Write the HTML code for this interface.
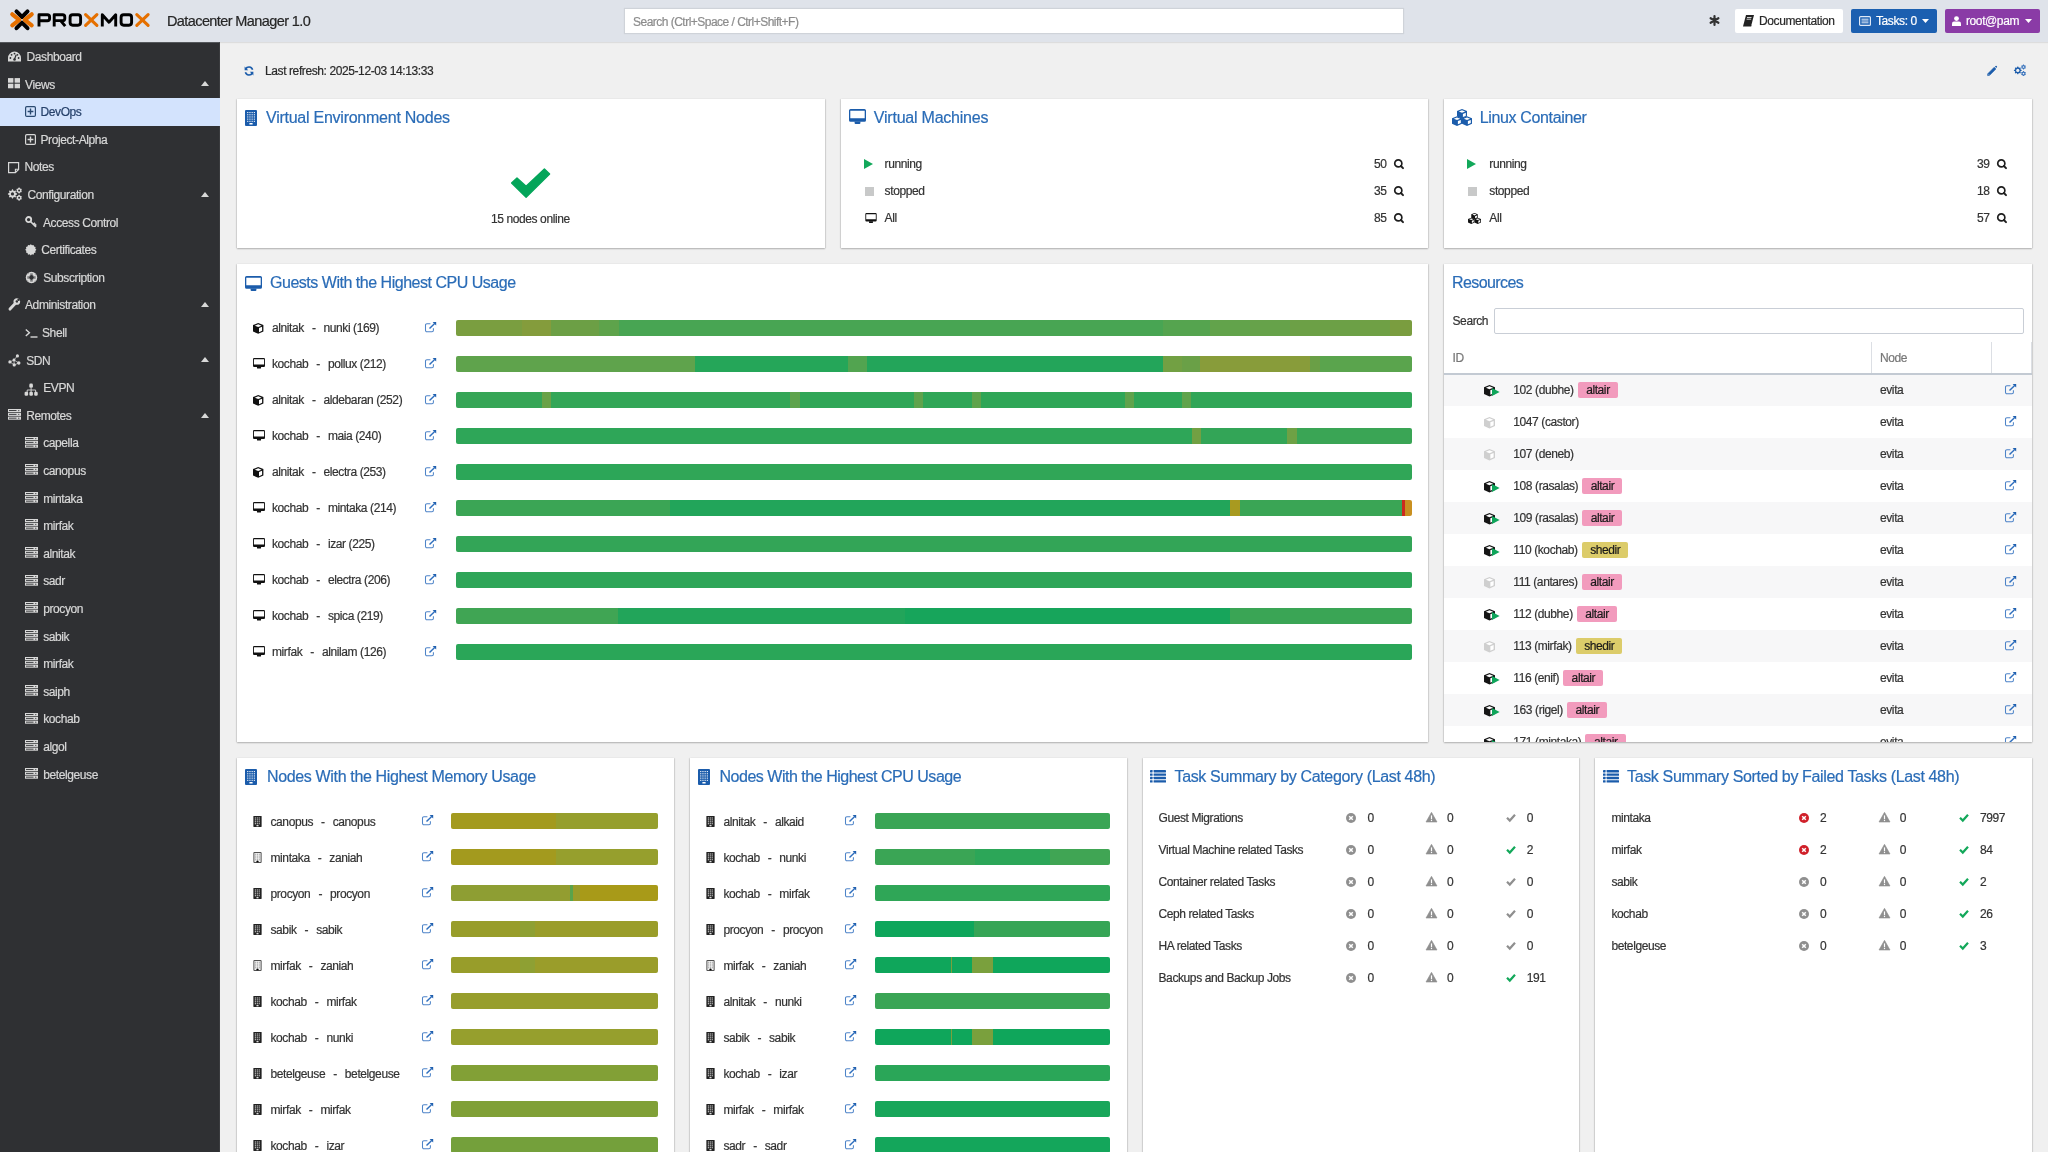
<!DOCTYPE html><html><head><meta charset="utf-8"><style>
*{box-sizing:border-box;margin:0;padding:0}
html,body{width:2048px;height:1152px;overflow:hidden;background:#f0f0f0;font-family:"Liberation Sans", sans-serif;}
.a{position:absolute}
.ic{position:absolute;overflow:visible}
.t{position:absolute;white-space:nowrap;font-size:12px;letter-spacing:-0.4px;color:#333333;line-height:14px;margin-top:0.5px;-webkit-text-stroke:0.2px currentColor}
.sb{position:absolute;white-space:nowrap;font-size:12px;letter-spacing:-0.4px;color:#dedede;line-height:14px;-webkit-text-stroke:0.2px currentColor}
.ttl{position:absolute;white-space:nowrap;font-size:16px;letter-spacing:-0.35px;color:#2a6cb7;line-height:18px;margin-top:0.9px;-webkit-text-stroke:0.2px currentColor}
.card{position:absolute;background:#fff;box-shadow:0 1px 1.5px rgba(0,0,0,.26),1px 0 1px rgba(0,0,0,.07),-1px 0 1px rgba(0,0,0,.07)}
.bar{position:absolute;height:16px;border-radius:2px}
</style></head><body><div id="root" style="position:absolute;left:0;top:0;width:2048px;height:1152px;overflow:hidden;background:#f0f0f0;will-change:transform">
<div class="a" style="left:0;top:0;width:2048px;height:42px;background:#dfe3ea;box-shadow:0 1px 1px rgba(0,0,0,.08)"></div>
<svg class="ic" style="left:0;top:0;width:160px;height:42px" viewBox="0 0 160 42">
<g fill="none" stroke-linecap="round" stroke-linejoin="miter" stroke-miterlimit="3">
<path d="M16.5 11.4L22 17 27.5 11.4" stroke="#000" stroke-width="4" stroke-linejoin="round"/>
<path d="M16.5 28.2L22 22.6 27.5 28.2" stroke="#000" stroke-width="4" stroke-linejoin="round"/>
<path d="M12.3 14.3L19.3 19.8 12.3 25.3" stroke="#e57000" stroke-width="4.2" stroke-linejoin="round"/>
<path d="M31.7 14.3L24.7 19.8 31.7 25.3" stroke="#e57000" stroke-width="4.2" stroke-linejoin="round"/>
</g>
<g fill="none" stroke="#000" stroke-width="2.9" stroke-linejoin="round">
<path d="M39 26.6V14.8H47.4Q49.6 14.8 49.6 17V18.6Q49.6 20.8 47.4 20.8H39.6"/>
<path d="M54.2 26.6V14.8H62.6Q64.8 14.8 64.8 17V18.4Q64.8 20.6 62.6 20.6H54.8M60.6 20.6L65.2 26.2"/>
<path d="M72.7 14.8H78Q80.6 14.8 80.6 17.4V22.6Q80.6 25.2 78 25.2H72.7Q70.1 25.2 70.1 22.6V17.4Q70.1 14.8 72.7 14.8Z"/>
<path d="M102.3 26.6V14.8L109 22.2 115.7 14.8V26.6"/>
<path d="M123.7 14.8H129Q131.6 14.8 131.6 17.4V22.6Q131.6 25.2 129 25.2H123.7Q121.1 25.2 121.1 22.6V17.4Q121.1 14.8 123.7 14.8Z"/>
</g>
<g stroke="#e57000" stroke-width="3.1" stroke-linecap="round">
<path d="M85.6 14.6L96.9 25.4M96.9 14.6L85.6 25.4"/>
<path d="M136.8 14.6L148.1 25.4M148.1 14.6L136.8 25.4"/>
</g>
</svg>
<div class="t" style="left:167px;top:12px;font-size:14.5px;letter-spacing:-0.6px;line-height:16px;color:#262626">Datacenter Manager 1.0</div>
<div class="a" style="left:625px;top:9px;width:778px;height:24px;background:#fff;box-shadow:0 0 1px 1px rgba(0,0,0,.07)"></div>
<div class="t" style="left:633px;top:14px;color:#8c8c8c;letter-spacing:-0.52px">Search (Ctrl+Space / Ctrl+Shift+F)</div>
<svg class="ic" style="left:1709px;top:15px;width:11px;height:11px" viewBox="0 0 11 11"><g stroke="#333" stroke-width="2.2" stroke-linecap="round"><path d="M5.5 1v9M1.6 3.25l7.8 4.5M1.6 7.75l7.8-4.5"/></g></svg>
<div class="a" style="left:1735px;top:9px;width:108px;height:24px;background:#fff;border-radius:2px"></div>
<svg class="ic" style="left:1743px;top:15px;width:11px;height:12px" viewBox="0 0 11 12"><path d="M3 0h8l-2.6 10H0.4z" fill="#222"/><path d="M0.4 10h8.2l-0.4 1.6H0z" fill="#222"/><path d="M4 2.5h4.5M3.6 4.2h4.5" stroke="#fff" stroke-width=".8"/></svg>
<div class="t" style="left:1759px;top:13px;color:#2a2a2a">Documentation</div>
<div class="a" style="left:1851px;top:9px;width:86px;height:24px;background:#1b5fb0;border-radius:2px"></div>
<svg class="ic" style="left:1859px;top:16px;width:12px;height:10px" viewBox="0 0 12 10"><rect x=".6" y=".6" width="10.8" height="8.8" rx="1" fill="none" stroke="#dfe9f7" stroke-width="1.2"/><path d="M2.5 3.2h7M2.5 5h7M2.5 6.8h7" stroke="#dfe9f7" stroke-width="1"/></svg>
<div class="t" style="left:1876px;top:13px;color:#fff">Tasks: 0</div>
<svg class="ic" style="left:1922px;top:19px;width:7px;height:4px" viewBox="0 0 7 4"><path d="M0 0h7L3.5 4z" fill="#fff"/></svg>
<div class="a" style="left:1945px;top:9px;width:95px;height:24px;background:#8a3ba6;border-radius:2px"></div>
<svg class="ic" style="left:1952px;top:16px;width:9px;height:10px" viewBox="0 0 9 10"><circle cx="4.5" cy="2.6" r="2.4" fill="#fff"/><path d="M0 10V7.6Q0 5.6 2 5.6h5q2 0 2 2V10z" fill="#fff"/></svg>
<div class="t" style="left:1966px;top:13px;color:#fff">root@pam</div>
<svg class="ic" style="left:2025px;top:19px;width:7px;height:4px" viewBox="0 0 7 4"><path d="M0 0h7L3.5 4z" fill="#fff"/></svg>
<div class="a" style="left:0;top:42px;width:220px;height:1110px;background:#2f3033;border-top:1px solid #55585c;border-right:1px solid #3a3b3e"></div>
<div class="a" style="left:0;top:97.5px;width:220px;height:28px;background:#d3e3fd"></div>
<svg class="ic" style="left:8px;top:51.25px;width:13px;height:11px" viewBox="0 0 13 11"><path d="M6.5 0.5A6.5 6.5 0 0 0 0 7v3.5h13V7A6.5 6.5 0 0 0 6.5 0.5z" fill="#d8d8d8"/><circle cx="2.4" cy="7" r=".9" fill="#2f3033"/><circle cx="3.6" cy="3.8" r=".9" fill="#2f3033"/><circle cx="6.5" cy="2.6" r=".9" fill="#2f3033"/><circle cx="10.6" cy="7" r=".9" fill="#2f3033"/><circle cx="9.4" cy="3.8" r=".9" fill="#2f3033"/><path d="M6.5 8.2L8.2 3.8" stroke="#2f3033" stroke-width="1.2"/><circle cx="6.5" cy="8.5" r="1.3" fill="#2f3033"/></svg>
<div class="sb" style="left:26.5px;top:50.05px;color:#d8d8d8">Dashboard</div>
<svg class="ic" style="left:8px;top:77.85px;width:12px;height:10.4px" viewBox="0 0 12 10.2"><rect x="0" y="0" width="5.4" height="4.6" fill="#d8d8d8"/><rect x="6.6" y="0" width="5.4" height="4.6" fill="#d8d8d8"/><rect x="0" y="5.6" width="5.4" height="4.6" fill="#d8d8d8"/><rect x="6.6" y="5.6" width="5.4" height="4.6" fill="#d8d8d8"/></svg>
<div class="sb" style="left:25px;top:77.65px;color:#d8d8d8">Views</div>
<svg class="ic" style="left:201px;top:81.35px;width:8px;height:5px" viewBox="0 0 8 5"><path d="M0 5h8L4 0z" fill="#d8d8d8"/></svg>
<svg class="ic" style="left:24.5px;top:106.45px;width:11px;height:11px" viewBox="0 0 11 11"><rect x=".6" y=".6" width="9.8" height="9.8" rx="1.2" fill="none" stroke="#2b4a70" stroke-width="1.2"/><path d="M5.5 2.6v5.8M2.6 5.5h5.8" stroke="#2b4a70" stroke-width="1.4"/></svg>
<div class="sb" style="left:40.5px;top:105.25px;color:#26416a">DevOps</div>
<svg class="ic" style="left:24.5px;top:134.05px;width:11px;height:11px" viewBox="0 0 11 11"><rect x=".6" y=".6" width="9.8" height="9.8" rx="1.2" fill="none" stroke="#d8d8d8" stroke-width="1.2"/><path d="M5.5 2.6v5.8M2.6 5.5h5.8" stroke="#d8d8d8" stroke-width="1.4"/></svg>
<div class="sb" style="left:40.5px;top:132.85px;color:#d8d8d8">Project-Alpha</div>
<svg class="ic" style="left:8px;top:161.65px;width:11.5px;height:11.5px" viewBox="0 0 11.5 11.5"><path d="M0.6 0.6h10v6.8l-3.2 3.2H0.6z" fill="none" stroke="#d8d8d8" stroke-width="1.2"/><path d="M10.6 7.2H7.4v3.4" fill="none" stroke="#d8d8d8" stroke-width="1.1"/></svg>
<div class="sb" style="left:24.5px;top:160.45px;color:#d8d8d8">Notes</div>
<svg class="ic" style="left:0px;top:184.75px;width:24px;height:18px" viewBox="0 0 24 18"><polygon points="12.05,4.37 12.95,4.37 13.49,5.70 14.10,5.95 15.42,5.39 16.06,6.03 15.50,7.35 15.75,7.96 17.08,8.50 17.08,9.40 15.75,9.94 15.50,10.55 16.06,11.87 15.42,12.51 14.10,11.95 13.49,12.20 12.95,13.53 12.05,13.53 11.51,12.20 10.90,11.95 9.58,12.51 8.94,11.87 9.50,10.55 9.25,9.94 7.92,9.40 7.92,8.50 9.25,7.96 9.50,7.35 8.94,6.03 9.58,5.39 10.90,5.95 11.51,5.70" fill="#d8d8d8"/><circle cx="12.5" cy="8.95" r="1.6" fill="#2f3033"/><polygon points="18.72,2.62 19.48,2.62 20.00,3.33 20.53,3.64 21.40,3.73 21.78,4.39 21.43,5.19 21.43,5.81 21.78,6.61 21.40,7.27 20.53,7.36 20.00,7.67 19.48,8.38 18.72,8.38 18.20,7.67 17.67,7.36 16.80,7.27 16.42,6.61 16.77,5.81 16.77,5.19 16.42,4.39 16.80,3.73 17.67,3.64 18.20,3.33" fill="#d8d8d8"/><circle cx="19.1" cy="5.5" r="1.0" fill="#2f3033"/><polygon points="18.72,9.87 19.48,9.87 20.00,10.58 20.53,10.89 21.40,10.98 21.78,11.64 21.43,12.44 21.43,13.06 21.78,13.86 21.40,14.52 20.53,14.61 20.00,14.92 19.48,15.63 18.72,15.63 18.20,14.92 17.67,14.61 16.80,14.52 16.42,13.86 16.77,13.06 16.77,12.44 16.42,11.64 16.80,10.98 17.67,10.89 18.20,10.58" fill="#d8d8d8"/><circle cx="19.1" cy="12.75" r="1.0" fill="#2f3033"/></svg>
<div class="sb" style="left:27.5px;top:188.05px;color:#d8d8d8">Configuration</div>
<svg class="ic" style="left:201px;top:191.75px;width:8px;height:5px" viewBox="0 0 8 5"><path d="M0 5h8L4 0z" fill="#d8d8d8"/></svg>
<svg class="ic" style="left:24.5px;top:216.35000000000002px;width:12.5px;height:12px" viewBox="0 0 12.5 12"><circle cx="3.6" cy="3.6" r="2.6" fill="none" stroke="#d8d8d8" stroke-width="1.8"/><path d="M5.5 5.5l5.5 5.5M8.4 8.4l1.6-1.6M9.8 9.8l1.4-1.4" stroke="#d8d8d8" stroke-width="1.7"/></svg>
<div class="sb" style="left:43px;top:215.65px;color:#d8d8d8">Access Control</div>
<svg class="ic" style="left:24.5px;top:244.15px;width:11.6px;height:11.6px" viewBox="0 0 11.6 11.6"><polygon points="11.40,5.80 10.24,6.99 10.65,8.60 9.05,9.05 8.60,10.65 6.99,10.24 5.80,11.40 4.61,10.24 3.00,10.65 2.55,9.05 0.95,8.60 1.36,6.99 0.20,5.80 1.36,4.61 0.95,3.00 2.55,2.55 3.00,0.95 4.61,1.36 5.80,0.20 6.99,1.36 8.60,0.95 9.05,2.55 10.65,3.00 10.24,4.61" fill="#d8d8d8"/></svg>
<div class="sb" style="left:41.2px;top:243.25px;color:#d8d8d8">Certificates</div>
<svg class="ic" style="left:24.5px;top:271.05px;width:13px;height:13px" viewBox="0 0 13 13"><circle cx="6.5" cy="6.5" r="5.7" fill="#d8d8d8"/><circle cx="6.5" cy="6.5" r="2.4" fill="#2f3033"/><path d="M5.2 3.1h2.6M5.2 9.9h2.6M3.1 5.2v2.6M9.9 5.2v2.6" stroke="#2f3033" stroke-width=".9"/><circle cx="6.5" cy="6.5" r="4.9" fill="none" stroke="#2f3033" stroke-width=".5" stroke-dasharray="1.5 6.2" stroke-dashoffset="-3.1" opacity=".6"/></svg>
<div class="sb" style="left:43.2px;top:270.85px;color:#d8d8d8">Subscription</div>
<svg class="ic" style="left:0px;top:295.15px;width:24px;height:18px" viewBox="0 0 24 18"><path d="M10 14.1L15.2 8.6" stroke="#d8d8d8" stroke-width="2.9" stroke-linecap="round"/><circle cx="16.8" cy="6.5" r="2.3" fill="none" stroke="#d8d8d8" stroke-width="2.1"/><circle cx="18.6" cy="4.7" r="1.25" fill="#2f3033"/></svg>
<div class="sb" style="left:25px;top:298.45px;color:#d8d8d8">Administration</div>
<svg class="ic" style="left:201px;top:302.15px;width:8px;height:5px" viewBox="0 0 8 5"><path d="M0 5h8L4 0z" fill="#d8d8d8"/></svg>
<svg class="ic" style="left:24.5px;top:328.25px;width:12.5px;height:10px" viewBox="0 0 12.5 10"><path d="M0.8 1.5l3.6 3.2-3.6 3.2" fill="none" stroke="#d8d8d8" stroke-width="1.4"/><path d="M5.5 9h7" stroke="#d8d8d8" stroke-width="1.4"/></svg>
<div class="sb" style="left:42px;top:326.05px;color:#d8d8d8">Shell</div>
<svg class="ic" style="left:0px;top:354.35px;width:24px;height:14px" viewBox="0 0 24 14"><path d="M9.9 7.9L14 6 17.4 1.9M14 6L14.2 10.9M14 6L18.8 9M9.9 7.9L14.2 10.9 18.8 9" stroke="#d8d8d8" stroke-width=".7" fill="none"/><circle cx="17.4" cy="1.9" r="1.6" fill="#d8d8d8"/><circle cx="14" cy="6" r="1.45" fill="#d8d8d8"/><circle cx="9.9" cy="7.9" r="1.6" fill="#d8d8d8"/><circle cx="18.8" cy="9" r="1.7" fill="#d8d8d8"/><circle cx="14.2" cy="10.9" r="1.6" fill="#d8d8d8"/></svg>
<div class="sb" style="left:26.2px;top:353.65px;color:#d8d8d8">SDN</div>
<svg class="ic" style="left:201px;top:357.35px;width:8px;height:5px" viewBox="0 0 8 5"><path d="M0 5h8L4 0z" fill="#d8d8d8"/></svg>
<svg class="ic" style="left:20px;top:381.95000000000005px;width:20px;height:16px" viewBox="20 0 20 16"><rect x="29.3" y="1.6" width="3.6" height="4.2" rx="1.3" fill="#d8d8d8"/><path d="M31.1 5.5V8M27.2 10.5V8H35.6V10.5M31.1 8V10.5" fill="none" stroke="#d8d8d8" stroke-width=".9"/><rect x="24.6" y="9.8" width="3.5" height="4" rx="1.2" fill="#d8d8d8"/><rect x="29.4" y="9.8" width="3.5" height="4" rx="1.2" fill="#d8d8d8"/><rect x="34.2" y="9.8" width="3.5" height="4" rx="1.2" fill="#d8d8d8"/></svg>
<div class="sb" style="left:43.2px;top:381.25px;color:#d8d8d8">EVPN</div>
<svg class="ic" style="left:8px;top:408.95px;width:13px;height:11px" viewBox="0 0 13 11"><rect x="0" y="0.0" width="13" height="3.1" fill="#d8d8d8"/><rect x="1" y="1.1" width="7.5" height=".9" fill="#2f3033"/><circle cx="10.8" cy="1.55" r=".6" fill="#2f3033"/><rect x="0" y="3.8" width="13" height="3.1" fill="#d8d8d8"/><rect x="1" y="4.9" width="7.5" height=".9" fill="#2f3033"/><circle cx="10.8" cy="5.35" r=".6" fill="#2f3033"/><rect x="0" y="7.6" width="13" height="3.1" fill="#d8d8d8"/><rect x="1" y="8.7" width="7.5" height=".9" fill="#2f3033"/><circle cx="10.8" cy="9.15" r=".6" fill="#2f3033"/></svg>
<div class="sb" style="left:26.2px;top:408.85px;color:#d8d8d8">Remotes</div>
<svg class="ic" style="left:201px;top:412.55px;width:8px;height:5px" viewBox="0 0 8 5"><path d="M0 5h8L4 0z" fill="#d8d8d8"/></svg>
<svg class="ic" style="left:24.5px;top:436.55px;width:13px;height:11px" viewBox="0 0 13 11"><rect x="0" y="0.0" width="13" height="3.1" fill="#d8d8d8"/><rect x="1" y="1.1" width="7.5" height=".9" fill="#2f3033"/><circle cx="10.8" cy="1.55" r=".6" fill="#2f3033"/><rect x="0" y="3.8" width="13" height="3.1" fill="#d8d8d8"/><rect x="1" y="4.9" width="7.5" height=".9" fill="#2f3033"/><circle cx="10.8" cy="5.35" r=".6" fill="#2f3033"/><rect x="0" y="7.6" width="13" height="3.1" fill="#d8d8d8"/><rect x="1" y="8.7" width="7.5" height=".9" fill="#2f3033"/><circle cx="10.8" cy="9.15" r=".6" fill="#2f3033"/></svg>
<div class="sb" style="left:43.2px;top:436.45px;color:#d8d8d8">capella</div>
<svg class="ic" style="left:24.5px;top:464.15px;width:13px;height:11px" viewBox="0 0 13 11"><rect x="0" y="0.0" width="13" height="3.1" fill="#d8d8d8"/><rect x="1" y="1.1" width="7.5" height=".9" fill="#2f3033"/><circle cx="10.8" cy="1.55" r=".6" fill="#2f3033"/><rect x="0" y="3.8" width="13" height="3.1" fill="#d8d8d8"/><rect x="1" y="4.9" width="7.5" height=".9" fill="#2f3033"/><circle cx="10.8" cy="5.35" r=".6" fill="#2f3033"/><rect x="0" y="7.6" width="13" height="3.1" fill="#d8d8d8"/><rect x="1" y="8.7" width="7.5" height=".9" fill="#2f3033"/><circle cx="10.8" cy="9.15" r=".6" fill="#2f3033"/></svg>
<div class="sb" style="left:43.2px;top:464.05px;color:#d8d8d8">canopus</div>
<svg class="ic" style="left:24.5px;top:491.75px;width:13px;height:11px" viewBox="0 0 13 11"><rect x="0" y="0.0" width="13" height="3.1" fill="#d8d8d8"/><rect x="1" y="1.1" width="7.5" height=".9" fill="#2f3033"/><circle cx="10.8" cy="1.55" r=".6" fill="#2f3033"/><rect x="0" y="3.8" width="13" height="3.1" fill="#d8d8d8"/><rect x="1" y="4.9" width="7.5" height=".9" fill="#2f3033"/><circle cx="10.8" cy="5.35" r=".6" fill="#2f3033"/><rect x="0" y="7.6" width="13" height="3.1" fill="#d8d8d8"/><rect x="1" y="8.7" width="7.5" height=".9" fill="#2f3033"/><circle cx="10.8" cy="9.15" r=".6" fill="#2f3033"/></svg>
<div class="sb" style="left:43.2px;top:491.65px;color:#d8d8d8">mintaka</div>
<svg class="ic" style="left:24.5px;top:519.35px;width:13px;height:11px" viewBox="0 0 13 11"><rect x="0" y="0.0" width="13" height="3.1" fill="#d8d8d8"/><rect x="1" y="1.1" width="7.5" height=".9" fill="#2f3033"/><circle cx="10.8" cy="1.55" r=".6" fill="#2f3033"/><rect x="0" y="3.8" width="13" height="3.1" fill="#d8d8d8"/><rect x="1" y="4.9" width="7.5" height=".9" fill="#2f3033"/><circle cx="10.8" cy="5.35" r=".6" fill="#2f3033"/><rect x="0" y="7.6" width="13" height="3.1" fill="#d8d8d8"/><rect x="1" y="8.7" width="7.5" height=".9" fill="#2f3033"/><circle cx="10.8" cy="9.15" r=".6" fill="#2f3033"/></svg>
<div class="sb" style="left:43.2px;top:519.25px;color:#d8d8d8">mirfak</div>
<svg class="ic" style="left:24.5px;top:546.9499999999999px;width:13px;height:11px" viewBox="0 0 13 11"><rect x="0" y="0.0" width="13" height="3.1" fill="#d8d8d8"/><rect x="1" y="1.1" width="7.5" height=".9" fill="#2f3033"/><circle cx="10.8" cy="1.55" r=".6" fill="#2f3033"/><rect x="0" y="3.8" width="13" height="3.1" fill="#d8d8d8"/><rect x="1" y="4.9" width="7.5" height=".9" fill="#2f3033"/><circle cx="10.8" cy="5.35" r=".6" fill="#2f3033"/><rect x="0" y="7.6" width="13" height="3.1" fill="#d8d8d8"/><rect x="1" y="8.7" width="7.5" height=".9" fill="#2f3033"/><circle cx="10.8" cy="9.15" r=".6" fill="#2f3033"/></svg>
<div class="sb" style="left:43.2px;top:546.85px;color:#d8d8d8">alnitak</div>
<svg class="ic" style="left:24.5px;top:574.55px;width:13px;height:11px" viewBox="0 0 13 11"><rect x="0" y="0.0" width="13" height="3.1" fill="#d8d8d8"/><rect x="1" y="1.1" width="7.5" height=".9" fill="#2f3033"/><circle cx="10.8" cy="1.55" r=".6" fill="#2f3033"/><rect x="0" y="3.8" width="13" height="3.1" fill="#d8d8d8"/><rect x="1" y="4.9" width="7.5" height=".9" fill="#2f3033"/><circle cx="10.8" cy="5.35" r=".6" fill="#2f3033"/><rect x="0" y="7.6" width="13" height="3.1" fill="#d8d8d8"/><rect x="1" y="8.7" width="7.5" height=".9" fill="#2f3033"/><circle cx="10.8" cy="9.15" r=".6" fill="#2f3033"/></svg>
<div class="sb" style="left:43.2px;top:574.45px;color:#d8d8d8">sadr</div>
<svg class="ic" style="left:24.5px;top:602.15px;width:13px;height:11px" viewBox="0 0 13 11"><rect x="0" y="0.0" width="13" height="3.1" fill="#d8d8d8"/><rect x="1" y="1.1" width="7.5" height=".9" fill="#2f3033"/><circle cx="10.8" cy="1.55" r=".6" fill="#2f3033"/><rect x="0" y="3.8" width="13" height="3.1" fill="#d8d8d8"/><rect x="1" y="4.9" width="7.5" height=".9" fill="#2f3033"/><circle cx="10.8" cy="5.35" r=".6" fill="#2f3033"/><rect x="0" y="7.6" width="13" height="3.1" fill="#d8d8d8"/><rect x="1" y="8.7" width="7.5" height=".9" fill="#2f3033"/><circle cx="10.8" cy="9.15" r=".6" fill="#2f3033"/></svg>
<div class="sb" style="left:43.2px;top:602.05px;color:#d8d8d8">procyon</div>
<svg class="ic" style="left:24.5px;top:629.75px;width:13px;height:11px" viewBox="0 0 13 11"><rect x="0" y="0.0" width="13" height="3.1" fill="#d8d8d8"/><rect x="1" y="1.1" width="7.5" height=".9" fill="#2f3033"/><circle cx="10.8" cy="1.55" r=".6" fill="#2f3033"/><rect x="0" y="3.8" width="13" height="3.1" fill="#d8d8d8"/><rect x="1" y="4.9" width="7.5" height=".9" fill="#2f3033"/><circle cx="10.8" cy="5.35" r=".6" fill="#2f3033"/><rect x="0" y="7.6" width="13" height="3.1" fill="#d8d8d8"/><rect x="1" y="8.7" width="7.5" height=".9" fill="#2f3033"/><circle cx="10.8" cy="9.15" r=".6" fill="#2f3033"/></svg>
<div class="sb" style="left:43.2px;top:629.65px;color:#d8d8d8">sabik</div>
<svg class="ic" style="left:24.5px;top:657.35px;width:13px;height:11px" viewBox="0 0 13 11"><rect x="0" y="0.0" width="13" height="3.1" fill="#d8d8d8"/><rect x="1" y="1.1" width="7.5" height=".9" fill="#2f3033"/><circle cx="10.8" cy="1.55" r=".6" fill="#2f3033"/><rect x="0" y="3.8" width="13" height="3.1" fill="#d8d8d8"/><rect x="1" y="4.9" width="7.5" height=".9" fill="#2f3033"/><circle cx="10.8" cy="5.35" r=".6" fill="#2f3033"/><rect x="0" y="7.6" width="13" height="3.1" fill="#d8d8d8"/><rect x="1" y="8.7" width="7.5" height=".9" fill="#2f3033"/><circle cx="10.8" cy="9.15" r=".6" fill="#2f3033"/></svg>
<div class="sb" style="left:43.2px;top:657.25px;color:#d8d8d8">mirfak</div>
<svg class="ic" style="left:24.5px;top:684.95px;width:13px;height:11px" viewBox="0 0 13 11"><rect x="0" y="0.0" width="13" height="3.1" fill="#d8d8d8"/><rect x="1" y="1.1" width="7.5" height=".9" fill="#2f3033"/><circle cx="10.8" cy="1.55" r=".6" fill="#2f3033"/><rect x="0" y="3.8" width="13" height="3.1" fill="#d8d8d8"/><rect x="1" y="4.9" width="7.5" height=".9" fill="#2f3033"/><circle cx="10.8" cy="5.35" r=".6" fill="#2f3033"/><rect x="0" y="7.6" width="13" height="3.1" fill="#d8d8d8"/><rect x="1" y="8.7" width="7.5" height=".9" fill="#2f3033"/><circle cx="10.8" cy="9.15" r=".6" fill="#2f3033"/></svg>
<div class="sb" style="left:43.2px;top:684.85px;color:#d8d8d8">saiph</div>
<svg class="ic" style="left:24.5px;top:712.5500000000001px;width:13px;height:11px" viewBox="0 0 13 11"><rect x="0" y="0.0" width="13" height="3.1" fill="#d8d8d8"/><rect x="1" y="1.1" width="7.5" height=".9" fill="#2f3033"/><circle cx="10.8" cy="1.55" r=".6" fill="#2f3033"/><rect x="0" y="3.8" width="13" height="3.1" fill="#d8d8d8"/><rect x="1" y="4.9" width="7.5" height=".9" fill="#2f3033"/><circle cx="10.8" cy="5.35" r=".6" fill="#2f3033"/><rect x="0" y="7.6" width="13" height="3.1" fill="#d8d8d8"/><rect x="1" y="8.7" width="7.5" height=".9" fill="#2f3033"/><circle cx="10.8" cy="9.15" r=".6" fill="#2f3033"/></svg>
<div class="sb" style="left:43.2px;top:712.45px;color:#d8d8d8">kochab</div>
<svg class="ic" style="left:24.5px;top:740.15px;width:13px;height:11px" viewBox="0 0 13 11"><rect x="0" y="0.0" width="13" height="3.1" fill="#d8d8d8"/><rect x="1" y="1.1" width="7.5" height=".9" fill="#2f3033"/><circle cx="10.8" cy="1.55" r=".6" fill="#2f3033"/><rect x="0" y="3.8" width="13" height="3.1" fill="#d8d8d8"/><rect x="1" y="4.9" width="7.5" height=".9" fill="#2f3033"/><circle cx="10.8" cy="5.35" r=".6" fill="#2f3033"/><rect x="0" y="7.6" width="13" height="3.1" fill="#d8d8d8"/><rect x="1" y="8.7" width="7.5" height=".9" fill="#2f3033"/><circle cx="10.8" cy="9.15" r=".6" fill="#2f3033"/></svg>
<div class="sb" style="left:43.2px;top:740.05px;color:#d8d8d8">algol</div>
<svg class="ic" style="left:24.5px;top:767.75px;width:13px;height:11px" viewBox="0 0 13 11"><rect x="0" y="0.0" width="13" height="3.1" fill="#d8d8d8"/><rect x="1" y="1.1" width="7.5" height=".9" fill="#2f3033"/><circle cx="10.8" cy="1.55" r=".6" fill="#2f3033"/><rect x="0" y="3.8" width="13" height="3.1" fill="#d8d8d8"/><rect x="1" y="4.9" width="7.5" height=".9" fill="#2f3033"/><circle cx="10.8" cy="5.35" r=".6" fill="#2f3033"/><rect x="0" y="7.6" width="13" height="3.1" fill="#d8d8d8"/><rect x="1" y="8.7" width="7.5" height=".9" fill="#2f3033"/><circle cx="10.8" cy="9.15" r=".6" fill="#2f3033"/></svg>
<div class="sb" style="left:43.2px;top:767.65px;color:#d8d8d8">betelgeuse</div>
<svg class="ic" style="left:243.5px;top:65.5px;width:10px;height:10px" viewBox="0 0 10 10"><path d="M8.6 3.8A3.8 3.8 0 0 0 1.6 3" fill="none" stroke="#1b5cab" stroke-width="1.6"/><path d="M0.6 0.6v3.6h3.6z" fill="#1b5cab"/><path d="M1.4 6.2A3.8 3.8 0 0 0 8.4 7" fill="none" stroke="#1b5cab" stroke-width="1.6"/><path d="M9.4 9.4V5.8H5.8z" fill="#1b5cab"/></svg>
<div class="t" style="left:265px;top:63px;color:#2a2a2a">Last refresh: 2025-12-03 14:13:33</div>
<svg class="ic" style="left:1984px;top:62px;width:14px;height:14px" viewBox="1984 62 14 14"><path d="M1988.3 74.6L1987.4 75l.4-.9" fill="#1b5cab"/><path d="M1988 73.5L1994.2 67.3 1995.9 69 1989.7 75.2 1987.6 75.6z" fill="#1b5cab" stroke="#1b5cab" stroke-width=".6" stroke-linejoin="round"/><path d="M1994.9 66.6L1995.6 65.9Q1996.1 65.5 1996.6 65.9L1996.9 66.2Q1997.3 66.7 1996.9 67.2L1996.2 67.9z" fill="#1b5cab"/><path d="M1988.3 73.9l1 1" stroke="#cfdbea" stroke-width=".6"/></svg>
<svg class="ic" style="left:2008px;top:60px;width:24px;height:20px" viewBox="2008 60 24 20"><polygon points="2017.42,66.52 2018.18,66.52 2018.64,67.62 2019.17,67.84 2020.27,67.39 2020.81,67.93 2020.36,69.03 2020.58,69.56 2021.68,70.02 2021.68,70.78 2020.58,71.24 2020.36,71.77 2020.81,72.87 2020.27,73.41 2019.17,72.96 2018.64,73.18 2018.18,74.28 2017.42,74.28 2016.96,73.18 2016.43,72.96 2015.33,73.41 2014.79,72.87 2015.24,71.77 2015.02,71.24 2013.92,70.78 2013.92,70.02 2015.02,69.56 2015.24,69.03 2014.79,67.93 2015.33,67.39 2016.43,67.84 2016.96,67.62" fill="#1b5cab"/><circle cx="2017.8" cy="70.4" r="1.6" fill="#f0f0f0"/><polygon points="2023.17,64.52 2023.83,64.52 2024.27,65.15 2024.72,65.41 2025.48,65.48 2025.81,66.04 2025.48,66.74 2025.48,67.26 2025.81,67.96 2025.48,68.52 2024.72,68.59 2024.27,68.85 2023.83,69.48 2023.17,69.48 2022.73,68.85 2022.28,68.59 2021.52,68.52 2021.19,67.96 2021.52,67.26 2021.52,66.74 2021.19,66.04 2021.52,65.48 2022.28,65.41 2022.73,65.15" fill="#3a74bd"/><circle cx="2023.5" cy="67.0" r="0.85" fill="#f0f0f0"/><polygon points="2023.17,71.12 2023.83,71.12 2024.27,71.75 2024.72,72.01 2025.48,72.08 2025.81,72.64 2025.48,73.34 2025.48,73.86 2025.81,74.56 2025.48,75.12 2024.72,75.19 2024.27,75.45 2023.83,76.08 2023.17,76.08 2022.73,75.45 2022.28,75.19 2021.52,75.12 2021.19,74.56 2021.52,73.86 2021.52,73.34 2021.19,72.64 2021.52,72.08 2022.28,72.01 2022.73,71.75" fill="#3a74bd"/><circle cx="2023.5" cy="73.6" r="0.85" fill="#f0f0f0"/></svg>
<div class="card" style="left:237px;top:99px;width:588px;height:149px"></div>
<svg class="ic" style="left:245px;top:110px;width:12px;height:16px" viewBox="0 0 12 16"><rect x="0" y="0" width="12" height="16" rx="1" fill="#1b5cab"/><rect x="2.2" y="2.0" width="1.1" height="1.1" fill="#fff"/><rect x="4.4" y="2.0" width="1.1" height="1.1" fill="#fff"/><rect x="6.6" y="2.0" width="1.1" height="1.1" fill="#fff"/><rect x="8.8" y="2.0" width="1.1" height="1.1" fill="#fff"/><rect x="2.2" y="4.2" width="1.1" height="1.1" fill="#fff"/><rect x="4.4" y="4.2" width="1.1" height="1.1" fill="#fff"/><rect x="6.6" y="4.2" width="1.1" height="1.1" fill="#fff"/><rect x="8.8" y="4.2" width="1.1" height="1.1" fill="#fff"/><rect x="2.2" y="6.4" width="1.1" height="1.1" fill="#fff"/><rect x="4.4" y="6.4" width="1.1" height="1.1" fill="#fff"/><rect x="6.6" y="6.4" width="1.1" height="1.1" fill="#fff"/><rect x="8.8" y="6.4" width="1.1" height="1.1" fill="#fff"/><rect x="2.2" y="8.6" width="1.1" height="1.1" fill="#fff"/><rect x="4.4" y="8.6" width="1.1" height="1.1" fill="#fff"/><rect x="6.6" y="8.6" width="1.1" height="1.1" fill="#fff"/><rect x="8.8" y="8.6" width="1.1" height="1.1" fill="#fff"/><rect x="2.2" y="10.8" width="1.1" height="1.1" fill="#fff"/><rect x="4.4" y="10.8" width="1.1" height="1.1" fill="#fff"/><rect x="6.6" y="10.8" width="1.1" height="1.1" fill="#fff"/><rect x="8.8" y="10.8" width="1.1" height="1.1" fill="#fff"/><rect x="4.3" y="13" width="3.4" height="1.6" rx=".6" fill="#fff"/></svg>
<div class="ttl" style="left:266px;top:108px;letter-spacing:-0.25px">Virtual Environment Nodes</div>
<svg class="ic" style="left:500px;top:160px;width:60px;height:45px" viewBox="500 160 60 45"><path d="M511.6 183.1L517 177.9 526.1 186.2 544.4 168.9 549.6 174 526.1 197.3z" fill="#04a55a" stroke="#04a55a" stroke-width="1.4" stroke-linejoin="round"/></svg>
<div class="t" style="left:491px;top:211px">15 nodes online</div>
<div class="card" style="left:841px;top:99px;width:587px;height:149px"></div>
<svg class="ic" style="left:848.8px;top:109.1px;width:17px;height:15px" viewBox="0 0 17 15"><path d="M1.6 0h13.8A1.6 1.6 0 0 1 17 1.6v9.6a1.6 1.6 0 0 1-1.6 1.6H1.6A1.6 1.6 0 0 1 0 11.2V1.6A1.6 1.6 0 0 1 1.6 0zM1.3 1.7v7.5h14.4V1.7z" fill="#1b5cab" fill-rule="evenodd"/><path d="M5.6 12.5h5.8v1.6q0 .9-.9.9h-4q-.9 0-.9-.9z" fill="#1b5cab"/></svg>
<div class="ttl" style="left:873.8px;top:108px;letter-spacing:-0.22px">Virtual Machines</div>
<svg class="ic" style="left:864px;top:159px;width:9px;height:10px" viewBox="0 0 9 10"><path d="M0 0L9 5 0 10z" fill="#12a85a"/></svg>
<div class="a" style="left:864.7px;top:186.5px;width:9.4px;height:9.4px;background:#c8c9c9"></div>
<svg class="ic" style="left:864.7px;top:212.8px;width:12px;height:10px" viewBox="0 0 17 15"><path d="M1.6 0h13.8A1.6 1.6 0 0 1 17 1.6v9.6a1.6 1.6 0 0 1-1.6 1.6H1.6A1.6 1.6 0 0 1 0 11.2V1.6A1.6 1.6 0 0 1 1.6 0zM1.3 1.7v7.5h14.4V1.7z" fill="#111" fill-rule="evenodd"/><path d="M5.6 12.5h5.8v1.6q0 .9-.9.9h-4q-.9 0-.9-.9z" fill="#111"/></svg>
<div class="t" style="left:884.6px;top:156.5px">running</div>
<div class="t" style="left:1356.5px;width:30px;text-align:right;top:156.5px">50</div>
<svg class="ic" style="left:1394.0px;top:159px;width:10px;height:10px" viewBox="0 0 10 10"><circle cx="4.3" cy="4.4" r="3.55" fill="none" stroke="#1e1e1e" stroke-width="1.7"/><path d="M6.9 7L9 9.1" stroke="#1e1e1e" stroke-width="2" stroke-linecap="round"/></svg>
<div class="t" style="left:884.6px;top:183.5px">stopped</div>
<div class="t" style="left:1356.5px;width:30px;text-align:right;top:183.5px">35</div>
<svg class="ic" style="left:1394.0px;top:186px;width:10px;height:10px" viewBox="0 0 10 10"><circle cx="4.3" cy="4.4" r="3.55" fill="none" stroke="#1e1e1e" stroke-width="1.7"/><path d="M6.9 7L9 9.1" stroke="#1e1e1e" stroke-width="2" stroke-linecap="round"/></svg>
<div class="t" style="left:884.6px;top:210.5px">All</div>
<div class="t" style="left:1356.5px;width:30px;text-align:right;top:210.5px">85</div>
<svg class="ic" style="left:1394.0px;top:213px;width:10px;height:10px" viewBox="0 0 10 10"><circle cx="4.3" cy="4.4" r="3.55" fill="none" stroke="#1e1e1e" stroke-width="1.7"/><path d="M6.9 7L9 9.1" stroke="#1e1e1e" stroke-width="2" stroke-linecap="round"/></svg>
<div class="card" style="left:1444px;top:99px;width:588px;height:149px"></div>
<svg class="ic" style="left:1452px;top:109px;width:20px;height:17px" viewBox="0 0 20 17"><path d="M10 0L15 2.1V7.6L10 9.8L5 7.6V2.1z" fill="#1b5cab"/><path d="M10 1.2L13.2 2.5L10 3.8L6.8 2.5z" fill="#fff"/><path d="M10.9 4.9L13.8 3.7V6.9L10.9 8.1z" fill="#fff"/><path d="M5 7.2L10 9.3V14.8L5 17.0L0 14.8V9.3z" fill="#1b5cab"/><path d="M5 8.4L8.2 9.7L5 11.0L1.8 9.7z" fill="#fff"/><path d="M5.9 12.100000000000001L8.8 10.9V14.100000000000001L5.9 15.3z" fill="#fff"/><path d="M15 7.2L20 9.3V14.8L15 17.0L10 14.8V9.3z" fill="#1b5cab"/><path d="M15 8.4L18.2 9.7L15 11.0L11.8 9.7z" fill="#fff"/><path d="M15.9 12.100000000000001L18.8 10.9V14.100000000000001L15.9 15.3z" fill="#fff"/></svg>
<div class="ttl" style="left:1479.7px;top:108px;letter-spacing:-0.35px">Linux Container</div>
<svg class="ic" style="left:1467px;top:159px;width:9px;height:10px" viewBox="0 0 9 10"><path d="M0 0L9 5 0 10z" fill="#12a85a"/></svg>
<div class="a" style="left:1467.7px;top:186.5px;width:9.4px;height:9.4px;background:#c8c9c9"></div>
<svg class="ic" style="left:1467.6px;top:212.6px;width:13px;height:11px" viewBox="0 0 20 17"><path d="M10 0L15 2.1V7.6L10 9.8L5 7.6V2.1z" fill="#111"/><path d="M10 1.2L13.2 2.5L10 3.8L6.8 2.5z" fill="#fff"/><path d="M10.9 4.9L13.8 3.7V6.9L10.9 8.1z" fill="#fff"/><path d="M5 7.2L10 9.3V14.8L5 17.0L0 14.8V9.3z" fill="#111"/><path d="M5 8.4L8.2 9.7L5 11.0L1.8 9.7z" fill="#fff"/><path d="M5.9 12.100000000000001L8.8 10.9V14.100000000000001L5.9 15.3z" fill="#fff"/><path d="M15 7.2L20 9.3V14.8L15 17.0L10 14.8V9.3z" fill="#111"/><path d="M15 8.4L18.2 9.7L15 11.0L11.8 9.7z" fill="#fff"/><path d="M15.9 12.100000000000001L18.8 10.9V14.100000000000001L15.9 15.3z" fill="#fff"/></svg>
<div class="t" style="left:1489.3px;top:156.5px">running</div>
<div class="t" style="left:1959.5px;width:30px;text-align:right;top:156.5px">39</div>
<svg class="ic" style="left:1997.0px;top:159px;width:10px;height:10px" viewBox="0 0 10 10"><circle cx="4.3" cy="4.4" r="3.55" fill="none" stroke="#1e1e1e" stroke-width="1.7"/><path d="M6.9 7L9 9.1" stroke="#1e1e1e" stroke-width="2" stroke-linecap="round"/></svg>
<div class="t" style="left:1489.3px;top:183.5px">stopped</div>
<div class="t" style="left:1959.5px;width:30px;text-align:right;top:183.5px">18</div>
<svg class="ic" style="left:1997.0px;top:186px;width:10px;height:10px" viewBox="0 0 10 10"><circle cx="4.3" cy="4.4" r="3.55" fill="none" stroke="#1e1e1e" stroke-width="1.7"/><path d="M6.9 7L9 9.1" stroke="#1e1e1e" stroke-width="2" stroke-linecap="round"/></svg>
<div class="t" style="left:1489.3px;top:210.5px">All</div>
<div class="t" style="left:1959.5px;width:30px;text-align:right;top:210.5px">57</div>
<svg class="ic" style="left:1997.0px;top:213px;width:10px;height:10px" viewBox="0 0 10 10"><circle cx="4.3" cy="4.4" r="3.55" fill="none" stroke="#1e1e1e" stroke-width="1.7"/><path d="M6.9 7L9 9.1" stroke="#1e1e1e" stroke-width="2" stroke-linecap="round"/></svg>
<div class="card" style="left:237px;top:264px;width:1191px;height:478px"></div>
<svg class="ic" style="left:244.5px;top:275.5px;width:17px;height:15px" viewBox="0 0 17 15"><path d="M1.6 0h13.8A1.6 1.6 0 0 1 17 1.6v9.6a1.6 1.6 0 0 1-1.6 1.6H1.6A1.6 1.6 0 0 1 0 11.2V1.6A1.6 1.6 0 0 1 1.6 0zM1.3 1.7v7.5h14.4V1.7z" fill="#1b5cab" fill-rule="evenodd"/><path d="M5.6 12.5h5.8v1.6q0 .9-.9.9h-4q-.9 0-.9-.9z" fill="#1b5cab"/></svg>
<div class="ttl" style="left:270px;top:273.5px;letter-spacing:-0.48px">Guests With the Highest CPU Usage</div>
<svg class="ic" style="left:252.8px;top:323px;width:10.4px;height:10.8px" viewBox="0 0 10.4 10.8"><path d="M5.2 0L10.4 2.1V8.5L5.2 10.8 0 8.5V2.1z" fill="#111"/><path d="M5.2 1.3L8.6 2.7 5.2 4.1 1.8 2.7z" fill="#fff"/><path d="M6 5L9.1 3.7V7.8L6 9.2z" fill="#fff"/></svg>
<div class="t" style="left:272px;top:320.5px;display:flex;gap:8px"><span>alnitak</span><span>-</span><span>nunki (169)</span></div>
<svg class="ic" style="left:425.3px;top:322.1px;width:12px;height:11px" viewBox="0 0 12 11"><path d="M8.4 6.3v2A1.4 1.4 0 0 1 7 9.7H1.9A1.4 1.4 0 0 1 0.5 8.3V3.2A1.4 1.4 0 0 1 1.9 1.8H5.4" fill="none" stroke="#2f6fbe" stroke-width="1.05" opacity=".85"/><path d="M7.6 0H11.2v3.6z" fill="#1d5dab"/><path d="M10.2 1L4.5 6.6" stroke="#2f6fbe" stroke-width="1.45"/></svg>
<div class="bar" style="left:456px;top:320px;width:956px;background:linear-gradient(90deg,#7a9e40 0.00%, #7a9e40 6.90%,#849c3c 6.90%, #849c3c 9.94%,#6c9f45 9.94%, #6c9f45 14.96%,#5ea34b 14.96%, #5ea34b 17.05%,#48a553 17.05%, #48a553 73.95%,#55a44f 73.95%, #55a44f 78.87%,#62a34b 78.87%, #62a34b 83.05%,#66a24a 83.05%, #66a24a 87.24%,#6ca046 87.24%, #6ca046 94.56%,#6fa045 94.56%, #6fa045 97.70%,#7a9d3f 97.70%, #7a9d3f 100.00%)"></div>
<svg class="ic" style="left:253px;top:358.1px;width:12px;height:10.6px" viewBox="0 0 17 15"><path d="M1.6 0h13.8A1.6 1.6 0 0 1 17 1.6v9.6a1.6 1.6 0 0 1-1.6 1.6H1.6A1.6 1.6 0 0 1 0 11.2V1.6A1.6 1.6 0 0 1 1.6 0zM1.3 1.7v7.5h14.4V1.7z" fill="#111" fill-rule="evenodd"/><path d="M5.6 12.5h5.8v1.6q0 .9-.9.9h-4q-.9 0-.9-.9z" fill="#111"/></svg>
<div class="t" style="left:272px;top:356.5px;display:flex;gap:8px"><span>kochab</span><span>-</span><span>pollux (212)</span></div>
<svg class="ic" style="left:425.3px;top:358.1px;width:12px;height:11px" viewBox="0 0 12 11"><path d="M8.4 6.3v2A1.4 1.4 0 0 1 7 9.7H1.9A1.4 1.4 0 0 1 0.5 8.3V3.2A1.4 1.4 0 0 1 1.9 1.8H5.4" fill="none" stroke="#2f6fbe" stroke-width="1.05" opacity=".85"/><path d="M7.6 0H11.2v3.6z" fill="#1d5dab"/><path d="M10.2 1L4.5 6.6" stroke="#2f6fbe" stroke-width="1.45"/></svg>
<div class="bar" style="left:456px;top:356px;width:956px;background:linear-gradient(90deg,#5fa34c 0.00%, #5fa34c 25.00%,#25a659 25.00%, #25a659 41.00%,#52a450 41.00%, #52a450 42.99%,#23a55a 42.99%, #23a55a 73.95%,#72a043 73.95%, #72a043 75.94%,#6aa047 75.94%, #6aa047 77.82%,#889c3a 77.82%, #889c3a 89.33%,#6a9f46 89.33%, #6a9f46 90.38%,#5aa44d 90.38%, #5aa44d 100.00%)"></div>
<svg class="ic" style="left:252.8px;top:395px;width:10.4px;height:10.8px" viewBox="0 0 10.4 10.8"><path d="M5.2 0L10.4 2.1V8.5L5.2 10.8 0 8.5V2.1z" fill="#111"/><path d="M5.2 1.3L8.6 2.7 5.2 4.1 1.8 2.7z" fill="#fff"/><path d="M6 5L9.1 3.7V7.8L6 9.2z" fill="#fff"/></svg>
<div class="t" style="left:272px;top:392.5px;display:flex;gap:8px"><span>alnitak</span><span>-</span><span>aldebaran (252)</span></div>
<svg class="ic" style="left:425.3px;top:394.1px;width:12px;height:11px" viewBox="0 0 12 11"><path d="M8.4 6.3v2A1.4 1.4 0 0 1 7 9.7H1.9A1.4 1.4 0 0 1 0.5 8.3V3.2A1.4 1.4 0 0 1 1.9 1.8H5.4" fill="none" stroke="#2f6fbe" stroke-width="1.05" opacity=".85"/><path d="M7.6 0H11.2v3.6z" fill="#1d5dab"/><path d="M10.2 1L4.5 6.6" stroke="#2f6fbe" stroke-width="1.45"/></svg>
<div class="bar" style="left:456px;top:392px;width:956px;background:linear-gradient(90deg,#36a556 0.00%, #36a556 9.00%,#6aa247 9.00%, #6aa247 9.94%,#33a657 9.94%, #33a657 34.94%,#5fa34c 34.94%, #5fa34c 35.98%,#30a657 35.98%, #30a657 47.91%,#5fa34c 47.91%, #5fa34c 48.85%,#30a657 48.85%, #30a657 53.97%,#5fa34c 53.97%, #5fa34c 54.92%,#2fa657 54.92%, #2fa657 69.98%,#5fa34c 69.98%, #5fa34c 70.92%,#2fa657 70.92%, #2fa657 75.94%,#60a34b 75.94%, #60a34b 76.88%,#31a657 76.88%, #31a657 100.00%)"></div>
<svg class="ic" style="left:253px;top:430.1px;width:12px;height:10.6px" viewBox="0 0 17 15"><path d="M1.6 0h13.8A1.6 1.6 0 0 1 17 1.6v9.6a1.6 1.6 0 0 1-1.6 1.6H1.6A1.6 1.6 0 0 1 0 11.2V1.6A1.6 1.6 0 0 1 1.6 0zM1.3 1.7v7.5h14.4V1.7z" fill="#111" fill-rule="evenodd"/><path d="M5.6 12.5h5.8v1.6q0 .9-.9.9h-4q-.9 0-.9-.9z" fill="#111"/></svg>
<div class="t" style="left:272px;top:428.5px;display:flex;gap:8px"><span>kochab</span><span>-</span><span>maia (240)</span></div>
<svg class="ic" style="left:425.3px;top:430.1px;width:12px;height:11px" viewBox="0 0 12 11"><path d="M8.4 6.3v2A1.4 1.4 0 0 1 7 9.7H1.9A1.4 1.4 0 0 1 0.5 8.3V3.2A1.4 1.4 0 0 1 1.9 1.8H5.4" fill="none" stroke="#2f6fbe" stroke-width="1.05" opacity=".85"/><path d="M7.6 0H11.2v3.6z" fill="#1d5dab"/><path d="M10.2 1L4.5 6.6" stroke="#2f6fbe" stroke-width="1.45"/></svg>
<div class="bar" style="left:456px;top:428px;width:956px;background:linear-gradient(90deg,#2ea658 0.00%, #2ea658 76.99%,#72a043 76.99%, #72a043 77.93%,#33a557 77.93%, #33a557 86.92%,#6ea145 86.92%, #6ea145 87.97%,#3aa555 87.97%, #3aa555 100.00%)"></div>
<svg class="ic" style="left:252.8px;top:467px;width:10.4px;height:10.8px" viewBox="0 0 10.4 10.8"><path d="M5.2 0L10.4 2.1V8.5L5.2 10.8 0 8.5V2.1z" fill="#111"/><path d="M5.2 1.3L8.6 2.7 5.2 4.1 1.8 2.7z" fill="#fff"/><path d="M6 5L9.1 3.7V7.8L6 9.2z" fill="#fff"/></svg>
<div class="t" style="left:272px;top:464.5px;display:flex;gap:8px"><span>alnitak</span><span>-</span><span>electra (253)</span></div>
<svg class="ic" style="left:425.3px;top:466.1px;width:12px;height:11px" viewBox="0 0 12 11"><path d="M8.4 6.3v2A1.4 1.4 0 0 1 7 9.7H1.9A1.4 1.4 0 0 1 0.5 8.3V3.2A1.4 1.4 0 0 1 1.9 1.8H5.4" fill="none" stroke="#2f6fbe" stroke-width="1.05" opacity=".85"/><path d="M7.6 0H11.2v3.6z" fill="#1d5dab"/><path d="M10.2 1L4.5 6.6" stroke="#2f6fbe" stroke-width="1.45"/></svg>
<div class="bar" style="left:456px;top:464px;width:956px;background:linear-gradient(90deg,#2ca658 0.00%, #2ca658 17.15%,#30a657 17.15%, #30a657 100.00%)"></div>
<svg class="ic" style="left:253px;top:502.1px;width:12px;height:10.6px" viewBox="0 0 17 15"><path d="M1.6 0h13.8A1.6 1.6 0 0 1 17 1.6v9.6a1.6 1.6 0 0 1-1.6 1.6H1.6A1.6 1.6 0 0 1 0 11.2V1.6A1.6 1.6 0 0 1 1.6 0zM1.3 1.7v7.5h14.4V1.7z" fill="#111" fill-rule="evenodd"/><path d="M5.6 12.5h5.8v1.6q0 .9-.9.9h-4q-.9 0-.9-.9z" fill="#111"/></svg>
<div class="t" style="left:272px;top:500.5px;display:flex;gap:8px"><span>kochab</span><span>-</span><span>mintaka (214)</span></div>
<svg class="ic" style="left:425.3px;top:502.1px;width:12px;height:11px" viewBox="0 0 12 11"><path d="M8.4 6.3v2A1.4 1.4 0 0 1 7 9.7H1.9A1.4 1.4 0 0 1 0.5 8.3V3.2A1.4 1.4 0 0 1 1.9 1.8H5.4" fill="none" stroke="#2f6fbe" stroke-width="1.05" opacity=".85"/><path d="M7.6 0H11.2v3.6z" fill="#1d5dab"/><path d="M10.2 1L4.5 6.6" stroke="#2f6fbe" stroke-width="1.45"/></svg>
<div class="bar" style="left:456px;top:500px;width:956px;background:linear-gradient(90deg,#3ba555 0.00%, #3ba555 22.38%,#22a55a 22.38%, #22a55a 80.96%,#a89a20 80.96%, #a89a20 82.01%,#3aa555 82.01%, #3aa555 98.95%,#cc2a1e 98.95%, #cc2a1e 99.27%,#c99020 99.27%, #c99020 100.00%)"></div>
<svg class="ic" style="left:253px;top:538.1px;width:12px;height:10.6px" viewBox="0 0 17 15"><path d="M1.6 0h13.8A1.6 1.6 0 0 1 17 1.6v9.6a1.6 1.6 0 0 1-1.6 1.6H1.6A1.6 1.6 0 0 1 0 11.2V1.6A1.6 1.6 0 0 1 1.6 0zM1.3 1.7v7.5h14.4V1.7z" fill="#111" fill-rule="evenodd"/><path d="M5.6 12.5h5.8v1.6q0 .9-.9.9h-4q-.9 0-.9-.9z" fill="#111"/></svg>
<div class="t" style="left:272px;top:536.5px;display:flex;gap:8px"><span>kochab</span><span>-</span><span>izar (225)</span></div>
<svg class="ic" style="left:425.3px;top:538.1px;width:12px;height:11px" viewBox="0 0 12 11"><path d="M8.4 6.3v2A1.4 1.4 0 0 1 7 9.7H1.9A1.4 1.4 0 0 1 0.5 8.3V3.2A1.4 1.4 0 0 1 1.9 1.8H5.4" fill="none" stroke="#2f6fbe" stroke-width="1.05" opacity=".85"/><path d="M7.6 0H11.2v3.6z" fill="#1d5dab"/><path d="M10.2 1L4.5 6.6" stroke="#2f6fbe" stroke-width="1.45"/></svg>
<div class="bar" style="left:456px;top:536px;width:956px;background:linear-gradient(90deg,#33a557 0.00%, #33a557 100.00%)"></div>
<svg class="ic" style="left:253px;top:574.1px;width:12px;height:10.6px" viewBox="0 0 17 15"><path d="M1.6 0h13.8A1.6 1.6 0 0 1 17 1.6v9.6a1.6 1.6 0 0 1-1.6 1.6H1.6A1.6 1.6 0 0 1 0 11.2V1.6A1.6 1.6 0 0 1 1.6 0zM1.3 1.7v7.5h14.4V1.7z" fill="#111" fill-rule="evenodd"/><path d="M5.6 12.5h5.8v1.6q0 .9-.9.9h-4q-.9 0-.9-.9z" fill="#111"/></svg>
<div class="t" style="left:272px;top:572.5px;display:flex;gap:8px"><span>kochab</span><span>-</span><span>electra (206)</span></div>
<svg class="ic" style="left:425.3px;top:574.1px;width:12px;height:11px" viewBox="0 0 12 11"><path d="M8.4 6.3v2A1.4 1.4 0 0 1 7 9.7H1.9A1.4 1.4 0 0 1 0.5 8.3V3.2A1.4 1.4 0 0 1 1.9 1.8H5.4" fill="none" stroke="#2f6fbe" stroke-width="1.05" opacity=".85"/><path d="M7.6 0H11.2v3.6z" fill="#1d5dab"/><path d="M10.2 1L4.5 6.6" stroke="#2f6fbe" stroke-width="1.45"/></svg>
<div class="bar" style="left:456px;top:572px;width:956px;background:linear-gradient(90deg,#2ea558 0.00%, #2ea558 100.00%)"></div>
<svg class="ic" style="left:253px;top:610.1px;width:12px;height:10.6px" viewBox="0 0 17 15"><path d="M1.6 0h13.8A1.6 1.6 0 0 1 17 1.6v9.6a1.6 1.6 0 0 1-1.6 1.6H1.6A1.6 1.6 0 0 1 0 11.2V1.6A1.6 1.6 0 0 1 1.6 0zM1.3 1.7v7.5h14.4V1.7z" fill="#111" fill-rule="evenodd"/><path d="M5.6 12.5h5.8v1.6q0 .9-.9.9h-4q-.9 0-.9-.9z" fill="#111"/></svg>
<div class="t" style="left:272px;top:608.5px;display:flex;gap:8px"><span>kochab</span><span>-</span><span>spica (219)</span></div>
<svg class="ic" style="left:425.3px;top:610.1px;width:12px;height:11px" viewBox="0 0 12 11"><path d="M8.4 6.3v2A1.4 1.4 0 0 1 7 9.7H1.9A1.4 1.4 0 0 1 0.5 8.3V3.2A1.4 1.4 0 0 1 1.9 1.8H5.4" fill="none" stroke="#2f6fbe" stroke-width="1.05" opacity=".85"/><path d="M7.6 0H11.2v3.6z" fill="#1d5dab"/><path d="M10.2 1L4.5 6.6" stroke="#2f6fbe" stroke-width="1.45"/></svg>
<div class="bar" style="left:456px;top:608px;width:956px;background:linear-gradient(90deg,#40a554 0.00%, #40a554 16.95%,#22a55a 16.95%, #22a55a 46.97%,#17a55b 46.97%, #17a55b 80.96%,#3aa555 80.96%, #3aa555 100.00%)"></div>
<svg class="ic" style="left:253px;top:646.1px;width:12px;height:10.6px" viewBox="0 0 17 15"><path d="M1.6 0h13.8A1.6 1.6 0 0 1 17 1.6v9.6a1.6 1.6 0 0 1-1.6 1.6H1.6A1.6 1.6 0 0 1 0 11.2V1.6A1.6 1.6 0 0 1 1.6 0zM1.3 1.7v7.5h14.4V1.7z" fill="#111" fill-rule="evenodd"/><path d="M5.6 12.5h5.8v1.6q0 .9-.9.9h-4q-.9 0-.9-.9z" fill="#111"/></svg>
<div class="t" style="left:272px;top:644.5px;display:flex;gap:8px"><span>mirfak</span><span>-</span><span>alnilam (126)</span></div>
<svg class="ic" style="left:425.3px;top:646.1px;width:12px;height:11px" viewBox="0 0 12 11"><path d="M8.4 6.3v2A1.4 1.4 0 0 1 7 9.7H1.9A1.4 1.4 0 0 1 0.5 8.3V3.2A1.4 1.4 0 0 1 1.9 1.8H5.4" fill="none" stroke="#2f6fbe" stroke-width="1.05" opacity=".85"/><path d="M7.6 0H11.2v3.6z" fill="#1d5dab"/><path d="M10.2 1L4.5 6.6" stroke="#2f6fbe" stroke-width="1.45"/></svg>
<div class="bar" style="left:456px;top:644px;width:956px;background:linear-gradient(90deg,#2aa658 0.00%, #2aa658 100.00%)"></div>
<div class="card" style="left:1444px;top:264px;width:588px;height:478px"></div>
<div class="ttl" style="left:1452px;top:273.5px;letter-spacing:-0.6px">Resources</div>
<div class="t" style="left:1452.5px;top:313.5px">Search</div>
<div class="a" style="left:1494px;top:308px;width:530px;height:26px;border:1px solid #c9ced6;border-radius:2px;background:#fff"></div>
<div class="t" style="left:1452.5px;top:350px;color:#777">ID</div>
<div class="t" style="left:1880px;top:350px;color:#777">Node</div>
<div class="a" style="left:1871px;top:342px;width:1px;height:32px;background:#dcdfe4"></div>
<div class="a" style="left:1991px;top:342px;width:1px;height:32px;background:#dcdfe4"></div>
<div class="a" style="left:2031px;top:342px;width:1px;height:32px;background:#dcdfe4"></div>
<div class="a" style="left:1444px;top:373px;width:588px;height:2px;background:#c3cad3"></div>
<div class="a" style="left:1444px;top:375px;width:588px;height:367px;overflow:hidden">
<div class="a" style="left:0;top:-1px;width:588px;height:32px;background:#f7f7f8"></div>
<svg class="ic" style="left:39.7px;top:9.7px;width:11px;height:11.4px" viewBox="0 0 10.4 10.8"><path d="M5.2 0L10.4 2.1V8.5L5.2 10.8 0 8.5V2.1z" fill="#151515"/><path d="M5.2 1.3L8.6 2.7 5.2 4.1 1.8 2.7z" fill="#fff"/><path d="M6 5L9.1 3.7V7.8L6 9.2z" fill="#fff"/></svg>
<svg class="ic" style="left:48px;top:13.4px;width:7.6px;height:8px" viewBox="0 0 7.6 8"><path d="M0 0L7.6 4 0 8z" fill="#0ea55a"/></svg>
<div class="t" style="left:69.3px;top:7.5px">102 (dubhe)<span style="display:inline-block;margin-left:4px;padding:0 8px 0 8.5px;height:15.5px;line-height:16.5px;background:#f29bbd;border-radius:2px;color:#1a1a1a;vertical-align:top;margin-top:-0.7px">altair</span></div>
<div class="t" style="left:436px;top:7.5px">evita</div>
<svg class="ic" style="left:561.3px;top:9.1px;width:12px;height:11px" viewBox="0 0 12 11"><path d="M8.4 6.3v2A1.4 1.4 0 0 1 7 9.7H1.9A1.4 1.4 0 0 1 0.5 8.3V3.2A1.4 1.4 0 0 1 1.9 1.8H5.4" fill="none" stroke="#2f6fbe" stroke-width="1.05" opacity=".85"/><path d="M7.6 0H11.2v3.6z" fill="#1d5dab"/><path d="M10.2 1L4.5 6.6" stroke="#2f6fbe" stroke-width="1.45"/></svg>
<div class="a" style="left:0;top:31px;width:588px;height:32px;background:#fff"></div>
<svg class="ic" style="left:39.7px;top:41.7px;width:11px;height:11.4px" viewBox="0 0 10.4 10.8"><path d="M5.2 0L10.4 2.1V8.5L5.2 10.8 0 8.5V2.1z" fill="#cfcfcf"/><path d="M5.2 1.3L8.6 2.7 5.2 4.1 1.8 2.7z" fill="#fff"/><path d="M6 5L9.1 3.7V7.8L6 9.2z" fill="#fff"/></svg>
<div class="t" style="left:69.3px;top:39.5px">1047 (castor)</div>
<div class="t" style="left:436px;top:39.5px">evita</div>
<svg class="ic" style="left:561.3px;top:41.1px;width:12px;height:11px" viewBox="0 0 12 11"><path d="M8.4 6.3v2A1.4 1.4 0 0 1 7 9.7H1.9A1.4 1.4 0 0 1 0.5 8.3V3.2A1.4 1.4 0 0 1 1.9 1.8H5.4" fill="none" stroke="#2f6fbe" stroke-width="1.05" opacity=".85"/><path d="M7.6 0H11.2v3.6z" fill="#1d5dab"/><path d="M10.2 1L4.5 6.6" stroke="#2f6fbe" stroke-width="1.45"/></svg>
<div class="a" style="left:0;top:63px;width:588px;height:32px;background:#f7f7f8"></div>
<svg class="ic" style="left:39.7px;top:73.7px;width:11px;height:11.4px" viewBox="0 0 10.4 10.8"><path d="M5.2 0L10.4 2.1V8.5L5.2 10.8 0 8.5V2.1z" fill="#cfcfcf"/><path d="M5.2 1.3L8.6 2.7 5.2 4.1 1.8 2.7z" fill="#fff"/><path d="M6 5L9.1 3.7V7.8L6 9.2z" fill="#fff"/></svg>
<div class="t" style="left:69.3px;top:71.5px">107 (deneb)</div>
<div class="t" style="left:436px;top:71.5px">evita</div>
<svg class="ic" style="left:561.3px;top:73.1px;width:12px;height:11px" viewBox="0 0 12 11"><path d="M8.4 6.3v2A1.4 1.4 0 0 1 7 9.7H1.9A1.4 1.4 0 0 1 0.5 8.3V3.2A1.4 1.4 0 0 1 1.9 1.8H5.4" fill="none" stroke="#2f6fbe" stroke-width="1.05" opacity=".85"/><path d="M7.6 0H11.2v3.6z" fill="#1d5dab"/><path d="M10.2 1L4.5 6.6" stroke="#2f6fbe" stroke-width="1.45"/></svg>
<div class="a" style="left:0;top:95px;width:588px;height:32px;background:#fff"></div>
<svg class="ic" style="left:39.7px;top:105.7px;width:11px;height:11.4px" viewBox="0 0 10.4 10.8"><path d="M5.2 0L10.4 2.1V8.5L5.2 10.8 0 8.5V2.1z" fill="#151515"/><path d="M5.2 1.3L8.6 2.7 5.2 4.1 1.8 2.7z" fill="#fff"/><path d="M6 5L9.1 3.7V7.8L6 9.2z" fill="#fff"/></svg>
<svg class="ic" style="left:48px;top:109.4px;width:7.6px;height:8px" viewBox="0 0 7.6 8"><path d="M0 0L7.6 4 0 8z" fill="#0ea55a"/></svg>
<div class="t" style="left:69.3px;top:103.5px">108 (rasalas)<span style="display:inline-block;margin-left:4px;padding:0 8px 0 8.5px;height:15.5px;line-height:16.5px;background:#f29bbd;border-radius:2px;color:#1a1a1a;vertical-align:top;margin-top:-0.7px">altair</span></div>
<div class="t" style="left:436px;top:103.5px">evita</div>
<svg class="ic" style="left:561.3px;top:105.1px;width:12px;height:11px" viewBox="0 0 12 11"><path d="M8.4 6.3v2A1.4 1.4 0 0 1 7 9.7H1.9A1.4 1.4 0 0 1 0.5 8.3V3.2A1.4 1.4 0 0 1 1.9 1.8H5.4" fill="none" stroke="#2f6fbe" stroke-width="1.05" opacity=".85"/><path d="M7.6 0H11.2v3.6z" fill="#1d5dab"/><path d="M10.2 1L4.5 6.6" stroke="#2f6fbe" stroke-width="1.45"/></svg>
<div class="a" style="left:0;top:127px;width:588px;height:32px;background:#f7f7f8"></div>
<svg class="ic" style="left:39.7px;top:137.7px;width:11px;height:11.4px" viewBox="0 0 10.4 10.8"><path d="M5.2 0L10.4 2.1V8.5L5.2 10.8 0 8.5V2.1z" fill="#151515"/><path d="M5.2 1.3L8.6 2.7 5.2 4.1 1.8 2.7z" fill="#fff"/><path d="M6 5L9.1 3.7V7.8L6 9.2z" fill="#fff"/></svg>
<svg class="ic" style="left:48px;top:141.4px;width:7.6px;height:8px" viewBox="0 0 7.6 8"><path d="M0 0L7.6 4 0 8z" fill="#0ea55a"/></svg>
<div class="t" style="left:69.3px;top:135.5px">109 (rasalas)<span style="display:inline-block;margin-left:4px;padding:0 8px 0 8.5px;height:15.5px;line-height:16.5px;background:#f29bbd;border-radius:2px;color:#1a1a1a;vertical-align:top;margin-top:-0.7px">altair</span></div>
<div class="t" style="left:436px;top:135.5px">evita</div>
<svg class="ic" style="left:561.3px;top:137.1px;width:12px;height:11px" viewBox="0 0 12 11"><path d="M8.4 6.3v2A1.4 1.4 0 0 1 7 9.7H1.9A1.4 1.4 0 0 1 0.5 8.3V3.2A1.4 1.4 0 0 1 1.9 1.8H5.4" fill="none" stroke="#2f6fbe" stroke-width="1.05" opacity=".85"/><path d="M7.6 0H11.2v3.6z" fill="#1d5dab"/><path d="M10.2 1L4.5 6.6" stroke="#2f6fbe" stroke-width="1.45"/></svg>
<div class="a" style="left:0;top:159px;width:588px;height:32px;background:#fff"></div>
<svg class="ic" style="left:39.7px;top:169.7px;width:11px;height:11.4px" viewBox="0 0 10.4 10.8"><path d="M5.2 0L10.4 2.1V8.5L5.2 10.8 0 8.5V2.1z" fill="#151515"/><path d="M5.2 1.3L8.6 2.7 5.2 4.1 1.8 2.7z" fill="#fff"/><path d="M6 5L9.1 3.7V7.8L6 9.2z" fill="#fff"/></svg>
<svg class="ic" style="left:48px;top:173.4px;width:7.6px;height:8px" viewBox="0 0 7.6 8"><path d="M0 0L7.6 4 0 8z" fill="#0ea55a"/></svg>
<div class="t" style="left:69.3px;top:167.5px">110 (kochab)<span style="display:inline-block;margin-left:4px;padding:0 8px 0 8.5px;height:15.5px;line-height:16.5px;background:#dccc6a;border-radius:2px;color:#1a1a1a;vertical-align:top;margin-top:-0.7px">shedir</span></div>
<div class="t" style="left:436px;top:167.5px">evita</div>
<svg class="ic" style="left:561.3px;top:169.1px;width:12px;height:11px" viewBox="0 0 12 11"><path d="M8.4 6.3v2A1.4 1.4 0 0 1 7 9.7H1.9A1.4 1.4 0 0 1 0.5 8.3V3.2A1.4 1.4 0 0 1 1.9 1.8H5.4" fill="none" stroke="#2f6fbe" stroke-width="1.05" opacity=".85"/><path d="M7.6 0H11.2v3.6z" fill="#1d5dab"/><path d="M10.2 1L4.5 6.6" stroke="#2f6fbe" stroke-width="1.45"/></svg>
<div class="a" style="left:0;top:191px;width:588px;height:32px;background:#f7f7f8"></div>
<svg class="ic" style="left:39.7px;top:201.7px;width:11px;height:11.4px" viewBox="0 0 10.4 10.8"><path d="M5.2 0L10.4 2.1V8.5L5.2 10.8 0 8.5V2.1z" fill="#cfcfcf"/><path d="M5.2 1.3L8.6 2.7 5.2 4.1 1.8 2.7z" fill="#fff"/><path d="M6 5L9.1 3.7V7.8L6 9.2z" fill="#fff"/></svg>
<div class="t" style="left:69.3px;top:199.5px">111 (antares)<span style="display:inline-block;margin-left:4px;padding:0 8px 0 8.5px;height:15.5px;line-height:16.5px;background:#f29bbd;border-radius:2px;color:#1a1a1a;vertical-align:top;margin-top:-0.7px">altair</span></div>
<div class="t" style="left:436px;top:199.5px">evita</div>
<svg class="ic" style="left:561.3px;top:201.1px;width:12px;height:11px" viewBox="0 0 12 11"><path d="M8.4 6.3v2A1.4 1.4 0 0 1 7 9.7H1.9A1.4 1.4 0 0 1 0.5 8.3V3.2A1.4 1.4 0 0 1 1.9 1.8H5.4" fill="none" stroke="#2f6fbe" stroke-width="1.05" opacity=".85"/><path d="M7.6 0H11.2v3.6z" fill="#1d5dab"/><path d="M10.2 1L4.5 6.6" stroke="#2f6fbe" stroke-width="1.45"/></svg>
<div class="a" style="left:0;top:223px;width:588px;height:32px;background:#fff"></div>
<svg class="ic" style="left:39.7px;top:233.7px;width:11px;height:11.4px" viewBox="0 0 10.4 10.8"><path d="M5.2 0L10.4 2.1V8.5L5.2 10.8 0 8.5V2.1z" fill="#151515"/><path d="M5.2 1.3L8.6 2.7 5.2 4.1 1.8 2.7z" fill="#fff"/><path d="M6 5L9.1 3.7V7.8L6 9.2z" fill="#fff"/></svg>
<svg class="ic" style="left:48px;top:237.4px;width:7.6px;height:8px" viewBox="0 0 7.6 8"><path d="M0 0L7.6 4 0 8z" fill="#0ea55a"/></svg>
<div class="t" style="left:69.3px;top:231.5px">112 (dubhe)<span style="display:inline-block;margin-left:4px;padding:0 8px 0 8.5px;height:15.5px;line-height:16.5px;background:#f29bbd;border-radius:2px;color:#1a1a1a;vertical-align:top;margin-top:-0.7px">altair</span></div>
<div class="t" style="left:436px;top:231.5px">evita</div>
<svg class="ic" style="left:561.3px;top:233.1px;width:12px;height:11px" viewBox="0 0 12 11"><path d="M8.4 6.3v2A1.4 1.4 0 0 1 7 9.7H1.9A1.4 1.4 0 0 1 0.5 8.3V3.2A1.4 1.4 0 0 1 1.9 1.8H5.4" fill="none" stroke="#2f6fbe" stroke-width="1.05" opacity=".85"/><path d="M7.6 0H11.2v3.6z" fill="#1d5dab"/><path d="M10.2 1L4.5 6.6" stroke="#2f6fbe" stroke-width="1.45"/></svg>
<div class="a" style="left:0;top:255px;width:588px;height:32px;background:#f7f7f8"></div>
<svg class="ic" style="left:39.7px;top:265.7px;width:11px;height:11.4px" viewBox="0 0 10.4 10.8"><path d="M5.2 0L10.4 2.1V8.5L5.2 10.8 0 8.5V2.1z" fill="#cfcfcf"/><path d="M5.2 1.3L8.6 2.7 5.2 4.1 1.8 2.7z" fill="#fff"/><path d="M6 5L9.1 3.7V7.8L6 9.2z" fill="#fff"/></svg>
<div class="t" style="left:69.3px;top:263.5px">113 (mirfak)<span style="display:inline-block;margin-left:4px;padding:0 8px 0 8.5px;height:15.5px;line-height:16.5px;background:#dccc6a;border-radius:2px;color:#1a1a1a;vertical-align:top;margin-top:-0.7px">shedir</span></div>
<div class="t" style="left:436px;top:263.5px">evita</div>
<svg class="ic" style="left:561.3px;top:265.1px;width:12px;height:11px" viewBox="0 0 12 11"><path d="M8.4 6.3v2A1.4 1.4 0 0 1 7 9.7H1.9A1.4 1.4 0 0 1 0.5 8.3V3.2A1.4 1.4 0 0 1 1.9 1.8H5.4" fill="none" stroke="#2f6fbe" stroke-width="1.05" opacity=".85"/><path d="M7.6 0H11.2v3.6z" fill="#1d5dab"/><path d="M10.2 1L4.5 6.6" stroke="#2f6fbe" stroke-width="1.45"/></svg>
<div class="a" style="left:0;top:287px;width:588px;height:32px;background:#fff"></div>
<svg class="ic" style="left:39.7px;top:297.7px;width:11px;height:11.4px" viewBox="0 0 10.4 10.8"><path d="M5.2 0L10.4 2.1V8.5L5.2 10.8 0 8.5V2.1z" fill="#151515"/><path d="M5.2 1.3L8.6 2.7 5.2 4.1 1.8 2.7z" fill="#fff"/><path d="M6 5L9.1 3.7V7.8L6 9.2z" fill="#fff"/></svg>
<svg class="ic" style="left:48px;top:301.4px;width:7.6px;height:8px" viewBox="0 0 7.6 8"><path d="M0 0L7.6 4 0 8z" fill="#0ea55a"/></svg>
<div class="t" style="left:69.3px;top:295.5px">116 (enif)<span style="display:inline-block;margin-left:4px;padding:0 8px 0 8.5px;height:15.5px;line-height:16.5px;background:#f29bbd;border-radius:2px;color:#1a1a1a;vertical-align:top;margin-top:-0.7px">altair</span></div>
<div class="t" style="left:436px;top:295.5px">evita</div>
<svg class="ic" style="left:561.3px;top:297.1px;width:12px;height:11px" viewBox="0 0 12 11"><path d="M8.4 6.3v2A1.4 1.4 0 0 1 7 9.7H1.9A1.4 1.4 0 0 1 0.5 8.3V3.2A1.4 1.4 0 0 1 1.9 1.8H5.4" fill="none" stroke="#2f6fbe" stroke-width="1.05" opacity=".85"/><path d="M7.6 0H11.2v3.6z" fill="#1d5dab"/><path d="M10.2 1L4.5 6.6" stroke="#2f6fbe" stroke-width="1.45"/></svg>
<div class="a" style="left:0;top:319px;width:588px;height:32px;background:#f7f7f8"></div>
<svg class="ic" style="left:39.7px;top:329.7px;width:11px;height:11.4px" viewBox="0 0 10.4 10.8"><path d="M5.2 0L10.4 2.1V8.5L5.2 10.8 0 8.5V2.1z" fill="#151515"/><path d="M5.2 1.3L8.6 2.7 5.2 4.1 1.8 2.7z" fill="#fff"/><path d="M6 5L9.1 3.7V7.8L6 9.2z" fill="#fff"/></svg>
<svg class="ic" style="left:48px;top:333.4px;width:7.6px;height:8px" viewBox="0 0 7.6 8"><path d="M0 0L7.6 4 0 8z" fill="#0ea55a"/></svg>
<div class="t" style="left:69.3px;top:327.5px">163 (rigel)<span style="display:inline-block;margin-left:4px;padding:0 8px 0 8.5px;height:15.5px;line-height:16.5px;background:#f29bbd;border-radius:2px;color:#1a1a1a;vertical-align:top;margin-top:-0.7px">altair</span></div>
<div class="t" style="left:436px;top:327.5px">evita</div>
<svg class="ic" style="left:561.3px;top:329.1px;width:12px;height:11px" viewBox="0 0 12 11"><path d="M8.4 6.3v2A1.4 1.4 0 0 1 7 9.7H1.9A1.4 1.4 0 0 1 0.5 8.3V3.2A1.4 1.4 0 0 1 1.9 1.8H5.4" fill="none" stroke="#2f6fbe" stroke-width="1.05" opacity=".85"/><path d="M7.6 0H11.2v3.6z" fill="#1d5dab"/><path d="M10.2 1L4.5 6.6" stroke="#2f6fbe" stroke-width="1.45"/></svg>
<div class="a" style="left:0;top:351px;width:588px;height:32px;background:#fff"></div>
<svg class="ic" style="left:39.7px;top:361.7px;width:11px;height:11.4px" viewBox="0 0 10.4 10.8"><path d="M5.2 0L10.4 2.1V8.5L5.2 10.8 0 8.5V2.1z" fill="#151515"/><path d="M5.2 1.3L8.6 2.7 5.2 4.1 1.8 2.7z" fill="#fff"/><path d="M6 5L9.1 3.7V7.8L6 9.2z" fill="#fff"/></svg>
<svg class="ic" style="left:48px;top:365.4px;width:7.6px;height:8px" viewBox="0 0 7.6 8"><path d="M0 0L7.6 4 0 8z" fill="#0ea55a"/></svg>
<div class="t" style="left:69.3px;top:359.5px">171 (mintaka)<span style="display:inline-block;margin-left:4px;padding:0 8px 0 8.5px;height:15.5px;line-height:16.5px;background:#f29bbd;border-radius:2px;color:#1a1a1a;vertical-align:top;margin-top:-0.7px">altair</span></div>
<div class="t" style="left:436px;top:359.5px">evita</div>
<svg class="ic" style="left:561.3px;top:361.1px;width:12px;height:11px" viewBox="0 0 12 11"><path d="M8.4 6.3v2A1.4 1.4 0 0 1 7 9.7H1.9A1.4 1.4 0 0 1 0.5 8.3V3.2A1.4 1.4 0 0 1 1.9 1.8H5.4" fill="none" stroke="#2f6fbe" stroke-width="1.05" opacity=".85"/><path d="M7.6 0H11.2v3.6z" fill="#1d5dab"/><path d="M10.2 1L4.5 6.6" stroke="#2f6fbe" stroke-width="1.45"/></svg>
</div>
<div class="card" style="left:237px;top:758px;width:436.75px;height:402px"></div>
<div class="card" style="left:689.75px;top:758px;width:436.75px;height:402px"></div>
<div class="card" style="left:1142.5px;top:758px;width:436.75px;height:402px"></div>
<div class="card" style="left:1595.25px;top:758px;width:436.75px;height:402px"></div>
<svg class="ic" style="left:244.7px;top:769px;width:12px;height:16px" viewBox="0 0 12 16"><rect x="0" y="0" width="12" height="16" rx="1" fill="#1b5cab"/><rect x="2.2" y="2.0" width="1.1" height="1.1" fill="#fff"/><rect x="4.4" y="2.0" width="1.1" height="1.1" fill="#fff"/><rect x="6.6" y="2.0" width="1.1" height="1.1" fill="#fff"/><rect x="8.8" y="2.0" width="1.1" height="1.1" fill="#fff"/><rect x="2.2" y="4.2" width="1.1" height="1.1" fill="#fff"/><rect x="4.4" y="4.2" width="1.1" height="1.1" fill="#fff"/><rect x="6.6" y="4.2" width="1.1" height="1.1" fill="#fff"/><rect x="8.8" y="4.2" width="1.1" height="1.1" fill="#fff"/><rect x="2.2" y="6.4" width="1.1" height="1.1" fill="#fff"/><rect x="4.4" y="6.4" width="1.1" height="1.1" fill="#fff"/><rect x="6.6" y="6.4" width="1.1" height="1.1" fill="#fff"/><rect x="8.8" y="6.4" width="1.1" height="1.1" fill="#fff"/><rect x="2.2" y="8.6" width="1.1" height="1.1" fill="#fff"/><rect x="4.4" y="8.6" width="1.1" height="1.1" fill="#fff"/><rect x="6.6" y="8.6" width="1.1" height="1.1" fill="#fff"/><rect x="8.8" y="8.6" width="1.1" height="1.1" fill="#fff"/><rect x="2.2" y="10.8" width="1.1" height="1.1" fill="#fff"/><rect x="4.4" y="10.8" width="1.1" height="1.1" fill="#fff"/><rect x="6.6" y="10.8" width="1.1" height="1.1" fill="#fff"/><rect x="8.8" y="10.8" width="1.1" height="1.1" fill="#fff"/><rect x="4.3" y="13" width="3.4" height="1.6" rx=".6" fill="#fff"/></svg>
<div class="ttl" style="left:267px;top:767px">Nodes With the Highest Memory Usage</div>
<svg class="ic" style="left:697.5px;top:769px;width:12px;height:16px" viewBox="0 0 12 16"><rect x="0" y="0" width="12" height="16" rx="1" fill="#1b5cab"/><rect x="2.2" y="2.0" width="1.1" height="1.1" fill="#fff"/><rect x="4.4" y="2.0" width="1.1" height="1.1" fill="#fff"/><rect x="6.6" y="2.0" width="1.1" height="1.1" fill="#fff"/><rect x="8.8" y="2.0" width="1.1" height="1.1" fill="#fff"/><rect x="2.2" y="4.2" width="1.1" height="1.1" fill="#fff"/><rect x="4.4" y="4.2" width="1.1" height="1.1" fill="#fff"/><rect x="6.6" y="4.2" width="1.1" height="1.1" fill="#fff"/><rect x="8.8" y="4.2" width="1.1" height="1.1" fill="#fff"/><rect x="2.2" y="6.4" width="1.1" height="1.1" fill="#fff"/><rect x="4.4" y="6.4" width="1.1" height="1.1" fill="#fff"/><rect x="6.6" y="6.4" width="1.1" height="1.1" fill="#fff"/><rect x="8.8" y="6.4" width="1.1" height="1.1" fill="#fff"/><rect x="2.2" y="8.6" width="1.1" height="1.1" fill="#fff"/><rect x="4.4" y="8.6" width="1.1" height="1.1" fill="#fff"/><rect x="6.6" y="8.6" width="1.1" height="1.1" fill="#fff"/><rect x="8.8" y="8.6" width="1.1" height="1.1" fill="#fff"/><rect x="2.2" y="10.8" width="1.1" height="1.1" fill="#fff"/><rect x="4.4" y="10.8" width="1.1" height="1.1" fill="#fff"/><rect x="6.6" y="10.8" width="1.1" height="1.1" fill="#fff"/><rect x="8.8" y="10.8" width="1.1" height="1.1" fill="#fff"/><rect x="4.3" y="13" width="3.4" height="1.6" rx=".6" fill="#fff"/></svg>
<div class="ttl" style="left:719.5px;top:767px;letter-spacing:-0.48px">Nodes With the Highest CPU Usage</div>
<svg class="ic" style="left:1150px;top:770px;width:16px;height:13px" viewBox="0 0 16 13"><rect x="0" y="0.0" width="2.6" height="2.4" rx=".4" fill="#1b5cab"/><rect x="3.6" y="0.0" width="12.4" height="2.4" rx=".4" fill="#1b5cab"/><rect x="0" y="3.4" width="2.6" height="2.4" rx=".4" fill="#1b5cab"/><rect x="3.6" y="3.4" width="12.4" height="2.4" rx=".4" fill="#1b5cab"/><rect x="0" y="6.8" width="2.6" height="2.4" rx=".4" fill="#1b5cab"/><rect x="3.6" y="6.8" width="12.4" height="2.4" rx=".4" fill="#1b5cab"/><rect x="0" y="10.2" width="2.6" height="2.4" rx=".4" fill="#1b5cab"/><rect x="3.6" y="10.2" width="12.4" height="2.4" rx=".4" fill="#1b5cab"/></svg>
<div class="ttl" style="left:1174.5px;top:767px">Task Summary by Category (Last 48h)</div>
<svg class="ic" style="left:1603px;top:770px;width:16px;height:13px" viewBox="0 0 16 13"><rect x="0" y="0.0" width="2.6" height="2.4" rx=".4" fill="#1b5cab"/><rect x="3.6" y="0.0" width="12.4" height="2.4" rx=".4" fill="#1b5cab"/><rect x="0" y="3.4" width="2.6" height="2.4" rx=".4" fill="#1b5cab"/><rect x="3.6" y="3.4" width="12.4" height="2.4" rx=".4" fill="#1b5cab"/><rect x="0" y="6.8" width="2.6" height="2.4" rx=".4" fill="#1b5cab"/><rect x="3.6" y="6.8" width="12.4" height="2.4" rx=".4" fill="#1b5cab"/><rect x="0" y="10.2" width="2.6" height="2.4" rx=".4" fill="#1b5cab"/><rect x="3.6" y="10.2" width="12.4" height="2.4" rx=".4" fill="#1b5cab"/></svg>
<div class="ttl" style="left:1627px;top:767px">Task Summary Sorted by Failed Tasks (Last 48h)</div>
<svg class="ic" style="left:252.7px;top:815.8px;width:9px;height:11px" viewBox="0 0 9 12"><rect x="0" y="0" width="9" height="12" rx=".5" fill="#222"/><rect x="1.6" y="1.6" width="1.1" height="1.1" fill="#fff"/><rect x="3.7" y="1.6" width="1.1" height="1.1" fill="#fff"/><rect x="5.8" y="1.6" width="1.1" height="1.1" fill="#fff"/><rect x="1.6" y="3.7" width="1.1" height="1.1" fill="#fff"/><rect x="3.7" y="3.7" width="1.1" height="1.1" fill="#fff"/><rect x="5.8" y="3.7" width="1.1" height="1.1" fill="#fff"/><rect x="1.6" y="5.8" width="1.1" height="1.1" fill="#fff"/><rect x="3.7" y="5.8" width="1.1" height="1.1" fill="#fff"/><rect x="5.8" y="5.8" width="1.1" height="1.1" fill="#fff"/><rect x="1.6" y="7.9" width="1.1" height="1.1" fill="#fff"/><rect x="3.7" y="7.9" width="1.1" height="1.1" fill="#fff"/><rect x="5.8" y="7.9" width="1.1" height="1.1" fill="#fff"/><rect x="3.4" y="10" width="2.2" height="1.2" fill="#fff"/></svg>
<div class="t" style="left:270.5px;top:814.5px;display:flex;gap:8px"><span>canopus</span><span>-</span><span>canopus</span></div>
<svg class="ic" style="left:422.1px;top:815.1px;width:12px;height:11px" viewBox="0 0 12 11"><path d="M8.4 6.3v2A1.4 1.4 0 0 1 7 9.7H1.9A1.4 1.4 0 0 1 0.5 8.3V3.2A1.4 1.4 0 0 1 1.9 1.8H5.4" fill="none" stroke="#2f6fbe" stroke-width="1.05" opacity=".85"/><path d="M7.6 0H11.2v3.6z" fill="#1d5dab"/><path d="M10.2 1L4.5 6.6" stroke="#2f6fbe" stroke-width="1.45"/></svg>
<div class="bar" style="left:451px;top:813px;width:206.60000000000002px;background:linear-gradient(90deg,#a39a1e 0.00%, #a39a1e 50.82%,#969f2d 50.82%, #969f2d 100.00%)"></div>
<svg class="ic" style="left:252.7px;top:851.8px;width:9px;height:11px" viewBox="0 0 9 12"><rect x="0.55" y="0.55" width="7.9" height="10.9" rx=".6" fill="#f4f4f4" stroke="#505050" stroke-width="1.1"/><rect x="1.9" y="1.9" width="1.2" height="1.1" fill="#9a9a9a"/><rect x="3.9" y="1.9" width="1.2" height="1.1" fill="#9a9a9a"/><rect x="5.9" y="1.9" width="1.2" height="1.1" fill="#9a9a9a"/><rect x="1.9" y="3.9" width="1.2" height="1.1" fill="#9a9a9a"/><rect x="3.9" y="3.9" width="1.2" height="1.1" fill="#9a9a9a"/><rect x="5.9" y="3.9" width="1.2" height="1.1" fill="#9a9a9a"/><rect x="1.9" y="5.9" width="1.2" height="1.1" fill="#9a9a9a"/><rect x="3.9" y="5.9" width="1.2" height="1.1" fill="#9a9a9a"/><rect x="5.9" y="5.9" width="1.2" height="1.1" fill="#9a9a9a"/><rect x="1.9" y="7.9" width="1.2" height="1.1" fill="#9a9a9a"/><rect x="3.9" y="7.9" width="1.2" height="1.1" fill="#9a9a9a"/><rect x="5.9" y="7.9" width="1.2" height="1.1" fill="#9a9a9a"/><path d="M3.3 11.2V9.8Q4.5 8.6 5.7 9.8V11.2z" fill="#000"/></svg>
<div class="t" style="left:270.5px;top:850.5px;display:flex;gap:8px"><span>mintaka</span><span>-</span><span>zaniah</span></div>
<svg class="ic" style="left:422.1px;top:851.1px;width:12px;height:11px" viewBox="0 0 12 11"><path d="M8.4 6.3v2A1.4 1.4 0 0 1 7 9.7H1.9A1.4 1.4 0 0 1 0.5 8.3V3.2A1.4 1.4 0 0 1 1.9 1.8H5.4" fill="none" stroke="#2f6fbe" stroke-width="1.05" opacity=".85"/><path d="M7.6 0H11.2v3.6z" fill="#1d5dab"/><path d="M10.2 1L4.5 6.6" stroke="#2f6fbe" stroke-width="1.45"/></svg>
<div class="bar" style="left:451px;top:849px;width:206.60000000000002px;background:linear-gradient(90deg,#a39a1e 0.00%, #a39a1e 50.82%,#969f2d 50.82%, #969f2d 100.00%)"></div>
<svg class="ic" style="left:252.7px;top:887.8px;width:9px;height:11px" viewBox="0 0 9 12"><rect x="0" y="0" width="9" height="12" rx=".5" fill="#222"/><rect x="1.6" y="1.6" width="1.1" height="1.1" fill="#fff"/><rect x="3.7" y="1.6" width="1.1" height="1.1" fill="#fff"/><rect x="5.8" y="1.6" width="1.1" height="1.1" fill="#fff"/><rect x="1.6" y="3.7" width="1.1" height="1.1" fill="#fff"/><rect x="3.7" y="3.7" width="1.1" height="1.1" fill="#fff"/><rect x="5.8" y="3.7" width="1.1" height="1.1" fill="#fff"/><rect x="1.6" y="5.8" width="1.1" height="1.1" fill="#fff"/><rect x="3.7" y="5.8" width="1.1" height="1.1" fill="#fff"/><rect x="5.8" y="5.8" width="1.1" height="1.1" fill="#fff"/><rect x="1.6" y="7.9" width="1.1" height="1.1" fill="#fff"/><rect x="3.7" y="7.9" width="1.1" height="1.1" fill="#fff"/><rect x="5.8" y="7.9" width="1.1" height="1.1" fill="#fff"/><rect x="3.4" y="10" width="2.2" height="1.2" fill="#fff"/></svg>
<div class="t" style="left:270.5px;top:886.5px;display:flex;gap:8px"><span>procyon</span><span>-</span><span>procyon</span></div>
<svg class="ic" style="left:422.1px;top:887.1px;width:12px;height:11px" viewBox="0 0 12 11"><path d="M8.4 6.3v2A1.4 1.4 0 0 1 7 9.7H1.9A1.4 1.4 0 0 1 0.5 8.3V3.2A1.4 1.4 0 0 1 1.9 1.8H5.4" fill="none" stroke="#2f6fbe" stroke-width="1.05" opacity=".85"/><path d="M7.6 0H11.2v3.6z" fill="#1d5dab"/><path d="M10.2 1L4.5 6.6" stroke="#2f6fbe" stroke-width="1.45"/></svg>
<div class="bar" style="left:451px;top:885px;width:206.60000000000002px;background:linear-gradient(90deg,#8e9e33 0.00%, #8e9e33 52.76%,#939d30 52.76%, #939d30 57.60%,#5aa34c 57.60%, #5aa34c 59.05%,#9a9c2a 59.05%, #9a9c2a 62.44%,#a89a18 62.44%, #a89a18 100.00%)"></div>
<svg class="ic" style="left:252.7px;top:923.8px;width:9px;height:11px" viewBox="0 0 9 12"><rect x="0" y="0" width="9" height="12" rx=".5" fill="#222"/><rect x="1.6" y="1.6" width="1.1" height="1.1" fill="#fff"/><rect x="3.7" y="1.6" width="1.1" height="1.1" fill="#fff"/><rect x="5.8" y="1.6" width="1.1" height="1.1" fill="#fff"/><rect x="1.6" y="3.7" width="1.1" height="1.1" fill="#fff"/><rect x="3.7" y="3.7" width="1.1" height="1.1" fill="#fff"/><rect x="5.8" y="3.7" width="1.1" height="1.1" fill="#fff"/><rect x="1.6" y="5.8" width="1.1" height="1.1" fill="#fff"/><rect x="3.7" y="5.8" width="1.1" height="1.1" fill="#fff"/><rect x="5.8" y="5.8" width="1.1" height="1.1" fill="#fff"/><rect x="1.6" y="7.9" width="1.1" height="1.1" fill="#fff"/><rect x="3.7" y="7.9" width="1.1" height="1.1" fill="#fff"/><rect x="5.8" y="7.9" width="1.1" height="1.1" fill="#fff"/><rect x="3.4" y="10" width="2.2" height="1.2" fill="#fff"/></svg>
<div class="t" style="left:270.5px;top:922.5px;display:flex;gap:8px"><span>sabik</span><span>-</span><span>sabik</span></div>
<svg class="ic" style="left:422.1px;top:923.1px;width:12px;height:11px" viewBox="0 0 12 11"><path d="M8.4 6.3v2A1.4 1.4 0 0 1 7 9.7H1.9A1.4 1.4 0 0 1 0.5 8.3V3.2A1.4 1.4 0 0 1 1.9 1.8H5.4" fill="none" stroke="#2f6fbe" stroke-width="1.05" opacity=".85"/><path d="M7.6 0H11.2v3.6z" fill="#1d5dab"/><path d="M10.2 1L4.5 6.6" stroke="#2f6fbe" stroke-width="1.45"/></svg>
<div class="bar" style="left:451px;top:921px;width:206.60000000000002px;background:linear-gradient(90deg,#989d2a 0.00%, #989d2a 33.40%,#8ea033 33.40%, #8ea033 40.66%,#9a9d2a 40.66%, #9a9d2a 100.00%)"></div>
<svg class="ic" style="left:252.7px;top:959.8px;width:9px;height:11px" viewBox="0 0 9 12"><rect x="0.55" y="0.55" width="7.9" height="10.9" rx=".6" fill="#f4f4f4" stroke="#505050" stroke-width="1.1"/><rect x="1.9" y="1.9" width="1.2" height="1.1" fill="#9a9a9a"/><rect x="3.9" y="1.9" width="1.2" height="1.1" fill="#9a9a9a"/><rect x="5.9" y="1.9" width="1.2" height="1.1" fill="#9a9a9a"/><rect x="1.9" y="3.9" width="1.2" height="1.1" fill="#9a9a9a"/><rect x="3.9" y="3.9" width="1.2" height="1.1" fill="#9a9a9a"/><rect x="5.9" y="3.9" width="1.2" height="1.1" fill="#9a9a9a"/><rect x="1.9" y="5.9" width="1.2" height="1.1" fill="#9a9a9a"/><rect x="3.9" y="5.9" width="1.2" height="1.1" fill="#9a9a9a"/><rect x="5.9" y="5.9" width="1.2" height="1.1" fill="#9a9a9a"/><rect x="1.9" y="7.9" width="1.2" height="1.1" fill="#9a9a9a"/><rect x="3.9" y="7.9" width="1.2" height="1.1" fill="#9a9a9a"/><rect x="5.9" y="7.9" width="1.2" height="1.1" fill="#9a9a9a"/><path d="M3.3 11.2V9.8Q4.5 8.6 5.7 9.8V11.2z" fill="#000"/></svg>
<div class="t" style="left:270.5px;top:958.5px;display:flex;gap:8px"><span>mirfak</span><span>-</span><span>zaniah</span></div>
<svg class="ic" style="left:422.1px;top:959.1px;width:12px;height:11px" viewBox="0 0 12 11"><path d="M8.4 6.3v2A1.4 1.4 0 0 1 7 9.7H1.9A1.4 1.4 0 0 1 0.5 8.3V3.2A1.4 1.4 0 0 1 1.9 1.8H5.4" fill="none" stroke="#2f6fbe" stroke-width="1.05" opacity=".85"/><path d="M7.6 0H11.2v3.6z" fill="#1d5dab"/><path d="M10.2 1L4.5 6.6" stroke="#2f6fbe" stroke-width="1.45"/></svg>
<div class="bar" style="left:451px;top:957px;width:206.60000000000002px;background:linear-gradient(90deg,#989d2a 0.00%, #989d2a 33.40%,#8ea033 33.40%, #8ea033 40.66%,#9a9d2a 40.66%, #9a9d2a 100.00%)"></div>
<svg class="ic" style="left:252.7px;top:995.8px;width:9px;height:11px" viewBox="0 0 9 12"><rect x="0" y="0" width="9" height="12" rx=".5" fill="#222"/><rect x="1.6" y="1.6" width="1.1" height="1.1" fill="#fff"/><rect x="3.7" y="1.6" width="1.1" height="1.1" fill="#fff"/><rect x="5.8" y="1.6" width="1.1" height="1.1" fill="#fff"/><rect x="1.6" y="3.7" width="1.1" height="1.1" fill="#fff"/><rect x="3.7" y="3.7" width="1.1" height="1.1" fill="#fff"/><rect x="5.8" y="3.7" width="1.1" height="1.1" fill="#fff"/><rect x="1.6" y="5.8" width="1.1" height="1.1" fill="#fff"/><rect x="3.7" y="5.8" width="1.1" height="1.1" fill="#fff"/><rect x="5.8" y="5.8" width="1.1" height="1.1" fill="#fff"/><rect x="1.6" y="7.9" width="1.1" height="1.1" fill="#fff"/><rect x="3.7" y="7.9" width="1.1" height="1.1" fill="#fff"/><rect x="5.8" y="7.9" width="1.1" height="1.1" fill="#fff"/><rect x="3.4" y="10" width="2.2" height="1.2" fill="#fff"/></svg>
<div class="t" style="left:270.5px;top:994.5px;display:flex;gap:8px"><span>kochab</span><span>-</span><span>mirfak</span></div>
<svg class="ic" style="left:422.1px;top:995.1px;width:12px;height:11px" viewBox="0 0 12 11"><path d="M8.4 6.3v2A1.4 1.4 0 0 1 7 9.7H1.9A1.4 1.4 0 0 1 0.5 8.3V3.2A1.4 1.4 0 0 1 1.9 1.8H5.4" fill="none" stroke="#2f6fbe" stroke-width="1.05" opacity=".85"/><path d="M7.6 0H11.2v3.6z" fill="#1d5dab"/><path d="M10.2 1L4.5 6.6" stroke="#2f6fbe" stroke-width="1.45"/></svg>
<div class="bar" style="left:451px;top:993px;width:206.60000000000002px;background:linear-gradient(90deg,#979e2c 0.00%, #979e2c 100.00%)"></div>
<svg class="ic" style="left:252.7px;top:1031.8px;width:9px;height:11px" viewBox="0 0 9 12"><rect x="0" y="0" width="9" height="12" rx=".5" fill="#222"/><rect x="1.6" y="1.6" width="1.1" height="1.1" fill="#fff"/><rect x="3.7" y="1.6" width="1.1" height="1.1" fill="#fff"/><rect x="5.8" y="1.6" width="1.1" height="1.1" fill="#fff"/><rect x="1.6" y="3.7" width="1.1" height="1.1" fill="#fff"/><rect x="3.7" y="3.7" width="1.1" height="1.1" fill="#fff"/><rect x="5.8" y="3.7" width="1.1" height="1.1" fill="#fff"/><rect x="1.6" y="5.8" width="1.1" height="1.1" fill="#fff"/><rect x="3.7" y="5.8" width="1.1" height="1.1" fill="#fff"/><rect x="5.8" y="5.8" width="1.1" height="1.1" fill="#fff"/><rect x="1.6" y="7.9" width="1.1" height="1.1" fill="#fff"/><rect x="3.7" y="7.9" width="1.1" height="1.1" fill="#fff"/><rect x="5.8" y="7.9" width="1.1" height="1.1" fill="#fff"/><rect x="3.4" y="10" width="2.2" height="1.2" fill="#fff"/></svg>
<div class="t" style="left:270.5px;top:1030.5px;display:flex;gap:8px"><span>kochab</span><span>-</span><span>nunki</span></div>
<svg class="ic" style="left:422.1px;top:1031.1px;width:12px;height:11px" viewBox="0 0 12 11"><path d="M8.4 6.3v2A1.4 1.4 0 0 1 7 9.7H1.9A1.4 1.4 0 0 1 0.5 8.3V3.2A1.4 1.4 0 0 1 1.9 1.8H5.4" fill="none" stroke="#2f6fbe" stroke-width="1.05" opacity=".85"/><path d="M7.6 0H11.2v3.6z" fill="#1d5dab"/><path d="M10.2 1L4.5 6.6" stroke="#2f6fbe" stroke-width="1.45"/></svg>
<div class="bar" style="left:451px;top:1029px;width:206.60000000000002px;background:linear-gradient(90deg,#969f2d 0.00%, #969f2d 100.00%)"></div>
<svg class="ic" style="left:252.7px;top:1067.8px;width:9px;height:11px" viewBox="0 0 9 12"><rect x="0" y="0" width="9" height="12" rx=".5" fill="#222"/><rect x="1.6" y="1.6" width="1.1" height="1.1" fill="#fff"/><rect x="3.7" y="1.6" width="1.1" height="1.1" fill="#fff"/><rect x="5.8" y="1.6" width="1.1" height="1.1" fill="#fff"/><rect x="1.6" y="3.7" width="1.1" height="1.1" fill="#fff"/><rect x="3.7" y="3.7" width="1.1" height="1.1" fill="#fff"/><rect x="5.8" y="3.7" width="1.1" height="1.1" fill="#fff"/><rect x="1.6" y="5.8" width="1.1" height="1.1" fill="#fff"/><rect x="3.7" y="5.8" width="1.1" height="1.1" fill="#fff"/><rect x="5.8" y="5.8" width="1.1" height="1.1" fill="#fff"/><rect x="1.6" y="7.9" width="1.1" height="1.1" fill="#fff"/><rect x="3.7" y="7.9" width="1.1" height="1.1" fill="#fff"/><rect x="5.8" y="7.9" width="1.1" height="1.1" fill="#fff"/><rect x="3.4" y="10" width="2.2" height="1.2" fill="#fff"/></svg>
<div class="t" style="left:270.5px;top:1066.5px;display:flex;gap:8px"><span>betelgeuse</span><span>-</span><span>betelgeuse</span></div>
<svg class="ic" style="left:422.1px;top:1067.1px;width:12px;height:11px" viewBox="0 0 12 11"><path d="M8.4 6.3v2A1.4 1.4 0 0 1 7 9.7H1.9A1.4 1.4 0 0 1 0.5 8.3V3.2A1.4 1.4 0 0 1 1.9 1.8H5.4" fill="none" stroke="#2f6fbe" stroke-width="1.05" opacity=".85"/><path d="M7.6 0H11.2v3.6z" fill="#1d5dab"/><path d="M10.2 1L4.5 6.6" stroke="#2f6fbe" stroke-width="1.45"/></svg>
<div class="bar" style="left:451px;top:1065px;width:206.60000000000002px;background:linear-gradient(90deg,#82a036 0.00%, #82a036 100.00%)"></div>
<svg class="ic" style="left:252.7px;top:1103.8px;width:9px;height:11px" viewBox="0 0 9 12"><rect x="0" y="0" width="9" height="12" rx=".5" fill="#222"/><rect x="1.6" y="1.6" width="1.1" height="1.1" fill="#fff"/><rect x="3.7" y="1.6" width="1.1" height="1.1" fill="#fff"/><rect x="5.8" y="1.6" width="1.1" height="1.1" fill="#fff"/><rect x="1.6" y="3.7" width="1.1" height="1.1" fill="#fff"/><rect x="3.7" y="3.7" width="1.1" height="1.1" fill="#fff"/><rect x="5.8" y="3.7" width="1.1" height="1.1" fill="#fff"/><rect x="1.6" y="5.8" width="1.1" height="1.1" fill="#fff"/><rect x="3.7" y="5.8" width="1.1" height="1.1" fill="#fff"/><rect x="5.8" y="5.8" width="1.1" height="1.1" fill="#fff"/><rect x="1.6" y="7.9" width="1.1" height="1.1" fill="#fff"/><rect x="3.7" y="7.9" width="1.1" height="1.1" fill="#fff"/><rect x="5.8" y="7.9" width="1.1" height="1.1" fill="#fff"/><rect x="3.4" y="10" width="2.2" height="1.2" fill="#fff"/></svg>
<div class="t" style="left:270.5px;top:1102.5px;display:flex;gap:8px"><span>mirfak</span><span>-</span><span>mirfak</span></div>
<svg class="ic" style="left:422.1px;top:1103.1px;width:12px;height:11px" viewBox="0 0 12 11"><path d="M8.4 6.3v2A1.4 1.4 0 0 1 7 9.7H1.9A1.4 1.4 0 0 1 0.5 8.3V3.2A1.4 1.4 0 0 1 1.9 1.8H5.4" fill="none" stroke="#2f6fbe" stroke-width="1.05" opacity=".85"/><path d="M7.6 0H11.2v3.6z" fill="#1d5dab"/><path d="M10.2 1L4.5 6.6" stroke="#2f6fbe" stroke-width="1.45"/></svg>
<div class="bar" style="left:451px;top:1101px;width:206.60000000000002px;background:linear-gradient(90deg,#80a037 0.00%, #80a037 100.00%)"></div>
<svg class="ic" style="left:252.7px;top:1139.8px;width:9px;height:11px" viewBox="0 0 9 12"><rect x="0" y="0" width="9" height="12" rx=".5" fill="#222"/><rect x="1.6" y="1.6" width="1.1" height="1.1" fill="#fff"/><rect x="3.7" y="1.6" width="1.1" height="1.1" fill="#fff"/><rect x="5.8" y="1.6" width="1.1" height="1.1" fill="#fff"/><rect x="1.6" y="3.7" width="1.1" height="1.1" fill="#fff"/><rect x="3.7" y="3.7" width="1.1" height="1.1" fill="#fff"/><rect x="5.8" y="3.7" width="1.1" height="1.1" fill="#fff"/><rect x="1.6" y="5.8" width="1.1" height="1.1" fill="#fff"/><rect x="3.7" y="5.8" width="1.1" height="1.1" fill="#fff"/><rect x="5.8" y="5.8" width="1.1" height="1.1" fill="#fff"/><rect x="1.6" y="7.9" width="1.1" height="1.1" fill="#fff"/><rect x="3.7" y="7.9" width="1.1" height="1.1" fill="#fff"/><rect x="5.8" y="7.9" width="1.1" height="1.1" fill="#fff"/><rect x="3.4" y="10" width="2.2" height="1.2" fill="#fff"/></svg>
<div class="t" style="left:270.5px;top:1138.5px;display:flex;gap:8px"><span>kochab</span><span>-</span><span>izar</span></div>
<svg class="ic" style="left:422.1px;top:1139.1px;width:12px;height:11px" viewBox="0 0 12 11"><path d="M8.4 6.3v2A1.4 1.4 0 0 1 7 9.7H1.9A1.4 1.4 0 0 1 0.5 8.3V3.2A1.4 1.4 0 0 1 1.9 1.8H5.4" fill="none" stroke="#2f6fbe" stroke-width="1.05" opacity=".85"/><path d="M7.6 0H11.2v3.6z" fill="#1d5dab"/><path d="M10.2 1L4.5 6.6" stroke="#2f6fbe" stroke-width="1.45"/></svg>
<div class="bar" style="left:451px;top:1137px;width:206.60000000000002px;background:linear-gradient(90deg,#74a03b 0.00%, #74a03b 100.00%)"></div>
<svg class="ic" style="left:705.6px;top:815.8px;width:9px;height:11px" viewBox="0 0 9 12"><rect x="0" y="0" width="9" height="12" rx=".5" fill="#222"/><rect x="1.6" y="1.6" width="1.1" height="1.1" fill="#fff"/><rect x="3.7" y="1.6" width="1.1" height="1.1" fill="#fff"/><rect x="5.8" y="1.6" width="1.1" height="1.1" fill="#fff"/><rect x="1.6" y="3.7" width="1.1" height="1.1" fill="#fff"/><rect x="3.7" y="3.7" width="1.1" height="1.1" fill="#fff"/><rect x="5.8" y="3.7" width="1.1" height="1.1" fill="#fff"/><rect x="1.6" y="5.8" width="1.1" height="1.1" fill="#fff"/><rect x="3.7" y="5.8" width="1.1" height="1.1" fill="#fff"/><rect x="5.8" y="5.8" width="1.1" height="1.1" fill="#fff"/><rect x="1.6" y="7.9" width="1.1" height="1.1" fill="#fff"/><rect x="3.7" y="7.9" width="1.1" height="1.1" fill="#fff"/><rect x="5.8" y="7.9" width="1.1" height="1.1" fill="#fff"/><rect x="3.4" y="10" width="2.2" height="1.2" fill="#fff"/></svg>
<div class="t" style="left:723.4px;top:814.5px;display:flex;gap:8px"><span>alnitak</span><span>-</span><span>alkaid</span></div>
<svg class="ic" style="left:845.4px;top:815.1px;width:12px;height:11px" viewBox="0 0 12 11"><path d="M8.4 6.3v2A1.4 1.4 0 0 1 7 9.7H1.9A1.4 1.4 0 0 1 0.5 8.3V3.2A1.4 1.4 0 0 1 1.9 1.8H5.4" fill="none" stroke="#2f6fbe" stroke-width="1.05" opacity=".85"/><path d="M7.6 0H11.2v3.6z" fill="#1d5dab"/><path d="M10.2 1L4.5 6.6" stroke="#2f6fbe" stroke-width="1.45"/></svg>
<div class="bar" style="left:875.3px;top:813px;width:235.20000000000005px;background:linear-gradient(90deg,#3aa555 0.00%, #3aa555 100.00%)"></div>
<svg class="ic" style="left:705.6px;top:851.8px;width:9px;height:11px" viewBox="0 0 9 12"><rect x="0" y="0" width="9" height="12" rx=".5" fill="#222"/><rect x="1.6" y="1.6" width="1.1" height="1.1" fill="#fff"/><rect x="3.7" y="1.6" width="1.1" height="1.1" fill="#fff"/><rect x="5.8" y="1.6" width="1.1" height="1.1" fill="#fff"/><rect x="1.6" y="3.7" width="1.1" height="1.1" fill="#fff"/><rect x="3.7" y="3.7" width="1.1" height="1.1" fill="#fff"/><rect x="5.8" y="3.7" width="1.1" height="1.1" fill="#fff"/><rect x="1.6" y="5.8" width="1.1" height="1.1" fill="#fff"/><rect x="3.7" y="5.8" width="1.1" height="1.1" fill="#fff"/><rect x="5.8" y="5.8" width="1.1" height="1.1" fill="#fff"/><rect x="1.6" y="7.9" width="1.1" height="1.1" fill="#fff"/><rect x="3.7" y="7.9" width="1.1" height="1.1" fill="#fff"/><rect x="5.8" y="7.9" width="1.1" height="1.1" fill="#fff"/><rect x="3.4" y="10" width="2.2" height="1.2" fill="#fff"/></svg>
<div class="t" style="left:723.4px;top:850.5px;display:flex;gap:8px"><span>kochab</span><span>-</span><span>nunki</span></div>
<svg class="ic" style="left:845.4px;top:851.1px;width:12px;height:11px" viewBox="0 0 12 11"><path d="M8.4 6.3v2A1.4 1.4 0 0 1 7 9.7H1.9A1.4 1.4 0 0 1 0.5 8.3V3.2A1.4 1.4 0 0 1 1.9 1.8H5.4" fill="none" stroke="#2f6fbe" stroke-width="1.05" opacity=".85"/><path d="M7.6 0H11.2v3.6z" fill="#1d5dab"/><path d="M10.2 1L4.5 6.6" stroke="#2f6fbe" stroke-width="1.45"/></svg>
<div class="bar" style="left:875.3px;top:849px;width:235.20000000000005px;background:linear-gradient(90deg,#3aa555 0.00%, #3aa555 42.39%,#2ca658 42.39%, #2ca658 74.28%,#40a554 74.28%, #40a554 100.00%)"></div>
<svg class="ic" style="left:705.6px;top:887.8px;width:9px;height:11px" viewBox="0 0 9 12"><rect x="0" y="0" width="9" height="12" rx=".5" fill="#222"/><rect x="1.6" y="1.6" width="1.1" height="1.1" fill="#fff"/><rect x="3.7" y="1.6" width="1.1" height="1.1" fill="#fff"/><rect x="5.8" y="1.6" width="1.1" height="1.1" fill="#fff"/><rect x="1.6" y="3.7" width="1.1" height="1.1" fill="#fff"/><rect x="3.7" y="3.7" width="1.1" height="1.1" fill="#fff"/><rect x="5.8" y="3.7" width="1.1" height="1.1" fill="#fff"/><rect x="1.6" y="5.8" width="1.1" height="1.1" fill="#fff"/><rect x="3.7" y="5.8" width="1.1" height="1.1" fill="#fff"/><rect x="5.8" y="5.8" width="1.1" height="1.1" fill="#fff"/><rect x="1.6" y="7.9" width="1.1" height="1.1" fill="#fff"/><rect x="3.7" y="7.9" width="1.1" height="1.1" fill="#fff"/><rect x="5.8" y="7.9" width="1.1" height="1.1" fill="#fff"/><rect x="3.4" y="10" width="2.2" height="1.2" fill="#fff"/></svg>
<div class="t" style="left:723.4px;top:886.5px;display:flex;gap:8px"><span>kochab</span><span>-</span><span>mirfak</span></div>
<svg class="ic" style="left:845.4px;top:887.1px;width:12px;height:11px" viewBox="0 0 12 11"><path d="M8.4 6.3v2A1.4 1.4 0 0 1 7 9.7H1.9A1.4 1.4 0 0 1 0.5 8.3V3.2A1.4 1.4 0 0 1 1.9 1.8H5.4" fill="none" stroke="#2f6fbe" stroke-width="1.05" opacity=".85"/><path d="M7.6 0H11.2v3.6z" fill="#1d5dab"/><path d="M10.2 1L4.5 6.6" stroke="#2f6fbe" stroke-width="1.45"/></svg>
<div class="bar" style="left:875.3px;top:885px;width:235.20000000000005px;background:linear-gradient(90deg,#2fa657 0.00%, #2fa657 100.00%)"></div>
<svg class="ic" style="left:705.6px;top:923.8px;width:9px;height:11px" viewBox="0 0 9 12"><rect x="0" y="0" width="9" height="12" rx=".5" fill="#222"/><rect x="1.6" y="1.6" width="1.1" height="1.1" fill="#fff"/><rect x="3.7" y="1.6" width="1.1" height="1.1" fill="#fff"/><rect x="5.8" y="1.6" width="1.1" height="1.1" fill="#fff"/><rect x="1.6" y="3.7" width="1.1" height="1.1" fill="#fff"/><rect x="3.7" y="3.7" width="1.1" height="1.1" fill="#fff"/><rect x="5.8" y="3.7" width="1.1" height="1.1" fill="#fff"/><rect x="1.6" y="5.8" width="1.1" height="1.1" fill="#fff"/><rect x="3.7" y="5.8" width="1.1" height="1.1" fill="#fff"/><rect x="5.8" y="5.8" width="1.1" height="1.1" fill="#fff"/><rect x="1.6" y="7.9" width="1.1" height="1.1" fill="#fff"/><rect x="3.7" y="7.9" width="1.1" height="1.1" fill="#fff"/><rect x="5.8" y="7.9" width="1.1" height="1.1" fill="#fff"/><rect x="3.4" y="10" width="2.2" height="1.2" fill="#fff"/></svg>
<div class="t" style="left:723.4px;top:922.5px;display:flex;gap:8px"><span>procyon</span><span>-</span><span>procyon</span></div>
<svg class="ic" style="left:845.4px;top:923.1px;width:12px;height:11px" viewBox="0 0 12 11"><path d="M8.4 6.3v2A1.4 1.4 0 0 1 7 9.7H1.9A1.4 1.4 0 0 1 0.5 8.3V3.2A1.4 1.4 0 0 1 1.9 1.8H5.4" fill="none" stroke="#2f6fbe" stroke-width="1.05" opacity=".85"/><path d="M7.6 0H11.2v3.6z" fill="#1d5dab"/><path d="M10.2 1L4.5 6.6" stroke="#2f6fbe" stroke-width="1.45"/></svg>
<div class="bar" style="left:875.3px;top:921px;width:235.20000000000005px;background:linear-gradient(90deg,#0ea65b 0.00%, #0ea65b 41.96%,#36a556 41.96%, #36a556 100.00%)"></div>
<svg class="ic" style="left:705.6px;top:959.8px;width:9px;height:11px" viewBox="0 0 9 12"><rect x="0.55" y="0.55" width="7.9" height="10.9" rx=".6" fill="#f4f4f4" stroke="#505050" stroke-width="1.1"/><rect x="1.9" y="1.9" width="1.2" height="1.1" fill="#9a9a9a"/><rect x="3.9" y="1.9" width="1.2" height="1.1" fill="#9a9a9a"/><rect x="5.9" y="1.9" width="1.2" height="1.1" fill="#9a9a9a"/><rect x="1.9" y="3.9" width="1.2" height="1.1" fill="#9a9a9a"/><rect x="3.9" y="3.9" width="1.2" height="1.1" fill="#9a9a9a"/><rect x="5.9" y="3.9" width="1.2" height="1.1" fill="#9a9a9a"/><rect x="1.9" y="5.9" width="1.2" height="1.1" fill="#9a9a9a"/><rect x="3.9" y="5.9" width="1.2" height="1.1" fill="#9a9a9a"/><rect x="5.9" y="5.9" width="1.2" height="1.1" fill="#9a9a9a"/><rect x="1.9" y="7.9" width="1.2" height="1.1" fill="#9a9a9a"/><rect x="3.9" y="7.9" width="1.2" height="1.1" fill="#9a9a9a"/><rect x="5.9" y="7.9" width="1.2" height="1.1" fill="#9a9a9a"/><path d="M3.3 11.2V9.8Q4.5 8.6 5.7 9.8V11.2z" fill="#000"/></svg>
<div class="t" style="left:723.4px;top:958.5px;display:flex;gap:8px"><span>mirfak</span><span>-</span><span>zaniah</span></div>
<svg class="ic" style="left:845.4px;top:959.1px;width:12px;height:11px" viewBox="0 0 12 11"><path d="M8.4 6.3v2A1.4 1.4 0 0 1 7 9.7H1.9A1.4 1.4 0 0 1 0.5 8.3V3.2A1.4 1.4 0 0 1 1.9 1.8H5.4" fill="none" stroke="#2f6fbe" stroke-width="1.05" opacity=".85"/><path d="M7.6 0H11.2v3.6z" fill="#1d5dab"/><path d="M10.2 1L4.5 6.6" stroke="#2f6fbe" stroke-width="1.45"/></svg>
<div class="bar" style="left:875.3px;top:957px;width:235.20000000000005px;background:linear-gradient(90deg,#0fa65b 0.00%, #0fa65b 32.19%,#7aa03d 32.19%, #7aa03d 32.61%,#0fa65b 32.61%, #0fa65b 41.11%,#7aa03d 41.11%, #7aa03d 50.04%,#0fa65b 50.04%, #0fa65b 100.00%)"></div>
<svg class="ic" style="left:705.6px;top:995.8px;width:9px;height:11px" viewBox="0 0 9 12"><rect x="0" y="0" width="9" height="12" rx=".5" fill="#222"/><rect x="1.6" y="1.6" width="1.1" height="1.1" fill="#fff"/><rect x="3.7" y="1.6" width="1.1" height="1.1" fill="#fff"/><rect x="5.8" y="1.6" width="1.1" height="1.1" fill="#fff"/><rect x="1.6" y="3.7" width="1.1" height="1.1" fill="#fff"/><rect x="3.7" y="3.7" width="1.1" height="1.1" fill="#fff"/><rect x="5.8" y="3.7" width="1.1" height="1.1" fill="#fff"/><rect x="1.6" y="5.8" width="1.1" height="1.1" fill="#fff"/><rect x="3.7" y="5.8" width="1.1" height="1.1" fill="#fff"/><rect x="5.8" y="5.8" width="1.1" height="1.1" fill="#fff"/><rect x="1.6" y="7.9" width="1.1" height="1.1" fill="#fff"/><rect x="3.7" y="7.9" width="1.1" height="1.1" fill="#fff"/><rect x="5.8" y="7.9" width="1.1" height="1.1" fill="#fff"/><rect x="3.4" y="10" width="2.2" height="1.2" fill="#fff"/></svg>
<div class="t" style="left:723.4px;top:994.5px;display:flex;gap:8px"><span>alnitak</span><span>-</span><span>nunki</span></div>
<svg class="ic" style="left:845.4px;top:995.1px;width:12px;height:11px" viewBox="0 0 12 11"><path d="M8.4 6.3v2A1.4 1.4 0 0 1 7 9.7H1.9A1.4 1.4 0 0 1 0.5 8.3V3.2A1.4 1.4 0 0 1 1.9 1.8H5.4" fill="none" stroke="#2f6fbe" stroke-width="1.05" opacity=".85"/><path d="M7.6 0H11.2v3.6z" fill="#1d5dab"/><path d="M10.2 1L4.5 6.6" stroke="#2f6fbe" stroke-width="1.45"/></svg>
<div class="bar" style="left:875.3px;top:993px;width:235.20000000000005px;background:linear-gradient(90deg,#3aa555 0.00%, #3aa555 100.00%)"></div>
<svg class="ic" style="left:705.6px;top:1031.8px;width:9px;height:11px" viewBox="0 0 9 12"><rect x="0" y="0" width="9" height="12" rx=".5" fill="#222"/><rect x="1.6" y="1.6" width="1.1" height="1.1" fill="#fff"/><rect x="3.7" y="1.6" width="1.1" height="1.1" fill="#fff"/><rect x="5.8" y="1.6" width="1.1" height="1.1" fill="#fff"/><rect x="1.6" y="3.7" width="1.1" height="1.1" fill="#fff"/><rect x="3.7" y="3.7" width="1.1" height="1.1" fill="#fff"/><rect x="5.8" y="3.7" width="1.1" height="1.1" fill="#fff"/><rect x="1.6" y="5.8" width="1.1" height="1.1" fill="#fff"/><rect x="3.7" y="5.8" width="1.1" height="1.1" fill="#fff"/><rect x="5.8" y="5.8" width="1.1" height="1.1" fill="#fff"/><rect x="1.6" y="7.9" width="1.1" height="1.1" fill="#fff"/><rect x="3.7" y="7.9" width="1.1" height="1.1" fill="#fff"/><rect x="5.8" y="7.9" width="1.1" height="1.1" fill="#fff"/><rect x="3.4" y="10" width="2.2" height="1.2" fill="#fff"/></svg>
<div class="t" style="left:723.4px;top:1030.5px;display:flex;gap:8px"><span>sabik</span><span>-</span><span>sabik</span></div>
<svg class="ic" style="left:845.4px;top:1031.1px;width:12px;height:11px" viewBox="0 0 12 11"><path d="M8.4 6.3v2A1.4 1.4 0 0 1 7 9.7H1.9A1.4 1.4 0 0 1 0.5 8.3V3.2A1.4 1.4 0 0 1 1.9 1.8H5.4" fill="none" stroke="#2f6fbe" stroke-width="1.05" opacity=".85"/><path d="M7.6 0H11.2v3.6z" fill="#1d5dab"/><path d="M10.2 1L4.5 6.6" stroke="#2f6fbe" stroke-width="1.45"/></svg>
<div class="bar" style="left:875.3px;top:1029px;width:235.20000000000005px;background:linear-gradient(90deg,#0fa65b 0.00%, #0fa65b 32.19%,#7aa03d 32.19%, #7aa03d 32.61%,#0fa65b 32.61%, #0fa65b 41.11%,#7aa03d 41.11%, #7aa03d 50.04%,#0fa65b 50.04%, #0fa65b 100.00%)"></div>
<svg class="ic" style="left:705.6px;top:1067.8px;width:9px;height:11px" viewBox="0 0 9 12"><rect x="0" y="0" width="9" height="12" rx=".5" fill="#222"/><rect x="1.6" y="1.6" width="1.1" height="1.1" fill="#fff"/><rect x="3.7" y="1.6" width="1.1" height="1.1" fill="#fff"/><rect x="5.8" y="1.6" width="1.1" height="1.1" fill="#fff"/><rect x="1.6" y="3.7" width="1.1" height="1.1" fill="#fff"/><rect x="3.7" y="3.7" width="1.1" height="1.1" fill="#fff"/><rect x="5.8" y="3.7" width="1.1" height="1.1" fill="#fff"/><rect x="1.6" y="5.8" width="1.1" height="1.1" fill="#fff"/><rect x="3.7" y="5.8" width="1.1" height="1.1" fill="#fff"/><rect x="5.8" y="5.8" width="1.1" height="1.1" fill="#fff"/><rect x="1.6" y="7.9" width="1.1" height="1.1" fill="#fff"/><rect x="3.7" y="7.9" width="1.1" height="1.1" fill="#fff"/><rect x="5.8" y="7.9" width="1.1" height="1.1" fill="#fff"/><rect x="3.4" y="10" width="2.2" height="1.2" fill="#fff"/></svg>
<div class="t" style="left:723.4px;top:1066.5px;display:flex;gap:8px"><span>kochab</span><span>-</span><span>izar</span></div>
<svg class="ic" style="left:845.4px;top:1067.1px;width:12px;height:11px" viewBox="0 0 12 11"><path d="M8.4 6.3v2A1.4 1.4 0 0 1 7 9.7H1.9A1.4 1.4 0 0 1 0.5 8.3V3.2A1.4 1.4 0 0 1 1.9 1.8H5.4" fill="none" stroke="#2f6fbe" stroke-width="1.05" opacity=".85"/><path d="M7.6 0H11.2v3.6z" fill="#1d5dab"/><path d="M10.2 1L4.5 6.6" stroke="#2f6fbe" stroke-width="1.45"/></svg>
<div class="bar" style="left:875.3px;top:1065px;width:235.20000000000005px;background:linear-gradient(90deg,#2aa658 0.00%, #2aa658 100.00%)"></div>
<svg class="ic" style="left:705.6px;top:1103.8px;width:9px;height:11px" viewBox="0 0 9 12"><rect x="0" y="0" width="9" height="12" rx=".5" fill="#222"/><rect x="1.6" y="1.6" width="1.1" height="1.1" fill="#fff"/><rect x="3.7" y="1.6" width="1.1" height="1.1" fill="#fff"/><rect x="5.8" y="1.6" width="1.1" height="1.1" fill="#fff"/><rect x="1.6" y="3.7" width="1.1" height="1.1" fill="#fff"/><rect x="3.7" y="3.7" width="1.1" height="1.1" fill="#fff"/><rect x="5.8" y="3.7" width="1.1" height="1.1" fill="#fff"/><rect x="1.6" y="5.8" width="1.1" height="1.1" fill="#fff"/><rect x="3.7" y="5.8" width="1.1" height="1.1" fill="#fff"/><rect x="5.8" y="5.8" width="1.1" height="1.1" fill="#fff"/><rect x="1.6" y="7.9" width="1.1" height="1.1" fill="#fff"/><rect x="3.7" y="7.9" width="1.1" height="1.1" fill="#fff"/><rect x="5.8" y="7.9" width="1.1" height="1.1" fill="#fff"/><rect x="3.4" y="10" width="2.2" height="1.2" fill="#fff"/></svg>
<div class="t" style="left:723.4px;top:1102.5px;display:flex;gap:8px"><span>mirfak</span><span>-</span><span>mirfak</span></div>
<svg class="ic" style="left:845.4px;top:1103.1px;width:12px;height:11px" viewBox="0 0 12 11"><path d="M8.4 6.3v2A1.4 1.4 0 0 1 7 9.7H1.9A1.4 1.4 0 0 1 0.5 8.3V3.2A1.4 1.4 0 0 1 1.9 1.8H5.4" fill="none" stroke="#2f6fbe" stroke-width="1.05" opacity=".85"/><path d="M7.6 0H11.2v3.6z" fill="#1d5dab"/><path d="M10.2 1L4.5 6.6" stroke="#2f6fbe" stroke-width="1.45"/></svg>
<div class="bar" style="left:875.3px;top:1101px;width:235.20000000000005px;background:linear-gradient(90deg,#18a65a 0.00%, #18a65a 100.00%)"></div>
<svg class="ic" style="left:705.6px;top:1139.8px;width:9px;height:11px" viewBox="0 0 9 12"><rect x="0" y="0" width="9" height="12" rx=".5" fill="#222"/><rect x="1.6" y="1.6" width="1.1" height="1.1" fill="#fff"/><rect x="3.7" y="1.6" width="1.1" height="1.1" fill="#fff"/><rect x="5.8" y="1.6" width="1.1" height="1.1" fill="#fff"/><rect x="1.6" y="3.7" width="1.1" height="1.1" fill="#fff"/><rect x="3.7" y="3.7" width="1.1" height="1.1" fill="#fff"/><rect x="5.8" y="3.7" width="1.1" height="1.1" fill="#fff"/><rect x="1.6" y="5.8" width="1.1" height="1.1" fill="#fff"/><rect x="3.7" y="5.8" width="1.1" height="1.1" fill="#fff"/><rect x="5.8" y="5.8" width="1.1" height="1.1" fill="#fff"/><rect x="1.6" y="7.9" width="1.1" height="1.1" fill="#fff"/><rect x="3.7" y="7.9" width="1.1" height="1.1" fill="#fff"/><rect x="5.8" y="7.9" width="1.1" height="1.1" fill="#fff"/><rect x="3.4" y="10" width="2.2" height="1.2" fill="#fff"/></svg>
<div class="t" style="left:723.4px;top:1138.5px;display:flex;gap:8px"><span>sadr</span><span>-</span><span>sadr</span></div>
<svg class="ic" style="left:845.4px;top:1139.1px;width:12px;height:11px" viewBox="0 0 12 11"><path d="M8.4 6.3v2A1.4 1.4 0 0 1 7 9.7H1.9A1.4 1.4 0 0 1 0.5 8.3V3.2A1.4 1.4 0 0 1 1.9 1.8H5.4" fill="none" stroke="#2f6fbe" stroke-width="1.05" opacity=".85"/><path d="M7.6 0H11.2v3.6z" fill="#1d5dab"/><path d="M10.2 1L4.5 6.6" stroke="#2f6fbe" stroke-width="1.45"/></svg>
<div class="bar" style="left:875.3px;top:1137px;width:235.20000000000005px;background:linear-gradient(90deg,#14a65b 0.00%, #14a65b 100.00%)"></div>
<div class="t" style="left:1158.5px;top:810.5px">Guest Migrations</div>
<svg class="ic" style="left:1346px;top:813.1px;width:10px;height:10px" viewBox="0 0 10 10"><circle cx="5" cy="5" r="5" fill="#8f8f8f"/><path d="M3.2 3.2l3.6 3.6M6.8 3.2l-3.6 3.6" stroke="#fff" stroke-width="1.5"/></svg>
<div class="t" style="left:1367.4px;top:810.5px">0</div>
<svg class="ic" style="left:1426px;top:811.9px;width:11px;height:10px" viewBox="0 0 11 10"><path d="M5.5 0.3L11 10H0z" fill="#8f8f8f" stroke="#8f8f8f" stroke-width=".6" stroke-linejoin="round"/><rect x="4.9" y="3.4" width="1.2" height="3.8" fill="#fff"/><rect x="4.9" y="7.9" width="1.2" height="1.2" fill="#fff"/></svg>
<div class="t" style="left:1447px;top:810.5px">0</div>
<svg class="ic" style="left:1506px;top:812.9px;width:10px;height:9px" viewBox="0 0 10 9"><path d="M1 4.8L3.8 7.6 9 1.8" fill="none" stroke="#8f8f8f" stroke-width="2.2"/></svg>
<div class="t" style="left:1526.8px;top:810.5px">0</div>
<div class="t" style="left:1158.5px;top:842.5px">Virtual Machine related Tasks</div>
<svg class="ic" style="left:1346px;top:845.1px;width:10px;height:10px" viewBox="0 0 10 10"><circle cx="5" cy="5" r="5" fill="#8f8f8f"/><path d="M3.2 3.2l3.6 3.6M6.8 3.2l-3.6 3.6" stroke="#fff" stroke-width="1.5"/></svg>
<div class="t" style="left:1367.4px;top:842.5px">0</div>
<svg class="ic" style="left:1426px;top:843.9px;width:11px;height:10px" viewBox="0 0 11 10"><path d="M5.5 0.3L11 10H0z" fill="#8f8f8f" stroke="#8f8f8f" stroke-width=".6" stroke-linejoin="round"/><rect x="4.9" y="3.4" width="1.2" height="3.8" fill="#fff"/><rect x="4.9" y="7.9" width="1.2" height="1.2" fill="#fff"/></svg>
<div class="t" style="left:1447px;top:842.5px">0</div>
<svg class="ic" style="left:1506px;top:844.9px;width:10px;height:9px" viewBox="0 0 10 9"><path d="M1 4.8L3.8 7.6 9 1.8" fill="none" stroke="#13a85a" stroke-width="2.2"/></svg>
<div class="t" style="left:1526.8px;top:842.5px">2</div>
<div class="t" style="left:1158.5px;top:874.5px">Container related Tasks</div>
<svg class="ic" style="left:1346px;top:877.1px;width:10px;height:10px" viewBox="0 0 10 10"><circle cx="5" cy="5" r="5" fill="#8f8f8f"/><path d="M3.2 3.2l3.6 3.6M6.8 3.2l-3.6 3.6" stroke="#fff" stroke-width="1.5"/></svg>
<div class="t" style="left:1367.4px;top:874.5px">0</div>
<svg class="ic" style="left:1426px;top:875.9px;width:11px;height:10px" viewBox="0 0 11 10"><path d="M5.5 0.3L11 10H0z" fill="#8f8f8f" stroke="#8f8f8f" stroke-width=".6" stroke-linejoin="round"/><rect x="4.9" y="3.4" width="1.2" height="3.8" fill="#fff"/><rect x="4.9" y="7.9" width="1.2" height="1.2" fill="#fff"/></svg>
<div class="t" style="left:1447px;top:874.5px">0</div>
<svg class="ic" style="left:1506px;top:876.9px;width:10px;height:9px" viewBox="0 0 10 9"><path d="M1 4.8L3.8 7.6 9 1.8" fill="none" stroke="#8f8f8f" stroke-width="2.2"/></svg>
<div class="t" style="left:1526.8px;top:874.5px">0</div>
<div class="t" style="left:1158.5px;top:906.5px">Ceph related Tasks</div>
<svg class="ic" style="left:1346px;top:909.1px;width:10px;height:10px" viewBox="0 0 10 10"><circle cx="5" cy="5" r="5" fill="#8f8f8f"/><path d="M3.2 3.2l3.6 3.6M6.8 3.2l-3.6 3.6" stroke="#fff" stroke-width="1.5"/></svg>
<div class="t" style="left:1367.4px;top:906.5px">0</div>
<svg class="ic" style="left:1426px;top:907.9px;width:11px;height:10px" viewBox="0 0 11 10"><path d="M5.5 0.3L11 10H0z" fill="#8f8f8f" stroke="#8f8f8f" stroke-width=".6" stroke-linejoin="round"/><rect x="4.9" y="3.4" width="1.2" height="3.8" fill="#fff"/><rect x="4.9" y="7.9" width="1.2" height="1.2" fill="#fff"/></svg>
<div class="t" style="left:1447px;top:906.5px">0</div>
<svg class="ic" style="left:1506px;top:908.9px;width:10px;height:9px" viewBox="0 0 10 9"><path d="M1 4.8L3.8 7.6 9 1.8" fill="none" stroke="#8f8f8f" stroke-width="2.2"/></svg>
<div class="t" style="left:1526.8px;top:906.5px">0</div>
<div class="t" style="left:1158.5px;top:938.5px">HA related Tasks</div>
<svg class="ic" style="left:1346px;top:941.1px;width:10px;height:10px" viewBox="0 0 10 10"><circle cx="5" cy="5" r="5" fill="#8f8f8f"/><path d="M3.2 3.2l3.6 3.6M6.8 3.2l-3.6 3.6" stroke="#fff" stroke-width="1.5"/></svg>
<div class="t" style="left:1367.4px;top:938.5px">0</div>
<svg class="ic" style="left:1426px;top:939.9px;width:11px;height:10px" viewBox="0 0 11 10"><path d="M5.5 0.3L11 10H0z" fill="#8f8f8f" stroke="#8f8f8f" stroke-width=".6" stroke-linejoin="round"/><rect x="4.9" y="3.4" width="1.2" height="3.8" fill="#fff"/><rect x="4.9" y="7.9" width="1.2" height="1.2" fill="#fff"/></svg>
<div class="t" style="left:1447px;top:938.5px">0</div>
<svg class="ic" style="left:1506px;top:940.9px;width:10px;height:9px" viewBox="0 0 10 9"><path d="M1 4.8L3.8 7.6 9 1.8" fill="none" stroke="#8f8f8f" stroke-width="2.2"/></svg>
<div class="t" style="left:1526.8px;top:938.5px">0</div>
<div class="t" style="left:1158.5px;top:970.5px">Backups and Backup Jobs</div>
<svg class="ic" style="left:1346px;top:973.1px;width:10px;height:10px" viewBox="0 0 10 10"><circle cx="5" cy="5" r="5" fill="#8f8f8f"/><path d="M3.2 3.2l3.6 3.6M6.8 3.2l-3.6 3.6" stroke="#fff" stroke-width="1.5"/></svg>
<div class="t" style="left:1367.4px;top:970.5px">0</div>
<svg class="ic" style="left:1426px;top:971.9px;width:11px;height:10px" viewBox="0 0 11 10"><path d="M5.5 0.3L11 10H0z" fill="#8f8f8f" stroke="#8f8f8f" stroke-width=".6" stroke-linejoin="round"/><rect x="4.9" y="3.4" width="1.2" height="3.8" fill="#fff"/><rect x="4.9" y="7.9" width="1.2" height="1.2" fill="#fff"/></svg>
<div class="t" style="left:1447px;top:970.5px">0</div>
<svg class="ic" style="left:1506px;top:972.9px;width:10px;height:9px" viewBox="0 0 10 9"><path d="M1 4.8L3.8 7.6 9 1.8" fill="none" stroke="#13a85a" stroke-width="2.2"/></svg>
<div class="t" style="left:1526.8px;top:970.5px">191</div>
<div class="t" style="left:1611.4px;top:810.5px">mintaka</div>
<svg class="ic" style="left:1799px;top:813.1px;width:10px;height:10px" viewBox="0 0 10 10"><circle cx="5" cy="5" r="5" fill="#d0202a"/><path d="M3.2 3.2l3.6 3.6M6.8 3.2l-3.6 3.6" stroke="#fff" stroke-width="1.5"/></svg>
<div class="t" style="left:1820px;top:810.5px">2</div>
<svg class="ic" style="left:1878.5px;top:811.9px;width:11px;height:10px" viewBox="0 0 11 10"><path d="M5.5 0.3L11 10H0z" fill="#8f8f8f" stroke="#8f8f8f" stroke-width=".6" stroke-linejoin="round"/><rect x="4.9" y="3.4" width="1.2" height="3.8" fill="#fff"/><rect x="4.9" y="7.9" width="1.2" height="1.2" fill="#fff"/></svg>
<div class="t" style="left:1899.8px;top:810.5px">0</div>
<svg class="ic" style="left:1959px;top:812.9px;width:10px;height:9px" viewBox="0 0 10 9"><path d="M1 4.8L3.8 7.6 9 1.8" fill="none" stroke="#13a85a" stroke-width="2.2"/></svg>
<div class="t" style="left:1980px;top:810.5px">7997</div>
<div class="t" style="left:1611.4px;top:842.5px">mirfak</div>
<svg class="ic" style="left:1799px;top:845.1px;width:10px;height:10px" viewBox="0 0 10 10"><circle cx="5" cy="5" r="5" fill="#d0202a"/><path d="M3.2 3.2l3.6 3.6M6.8 3.2l-3.6 3.6" stroke="#fff" stroke-width="1.5"/></svg>
<div class="t" style="left:1820px;top:842.5px">2</div>
<svg class="ic" style="left:1878.5px;top:843.9px;width:11px;height:10px" viewBox="0 0 11 10"><path d="M5.5 0.3L11 10H0z" fill="#8f8f8f" stroke="#8f8f8f" stroke-width=".6" stroke-linejoin="round"/><rect x="4.9" y="3.4" width="1.2" height="3.8" fill="#fff"/><rect x="4.9" y="7.9" width="1.2" height="1.2" fill="#fff"/></svg>
<div class="t" style="left:1899.8px;top:842.5px">0</div>
<svg class="ic" style="left:1959px;top:844.9px;width:10px;height:9px" viewBox="0 0 10 9"><path d="M1 4.8L3.8 7.6 9 1.8" fill="none" stroke="#13a85a" stroke-width="2.2"/></svg>
<div class="t" style="left:1980px;top:842.5px">84</div>
<div class="t" style="left:1611.4px;top:874.5px">sabik</div>
<svg class="ic" style="left:1799px;top:877.1px;width:10px;height:10px" viewBox="0 0 10 10"><circle cx="5" cy="5" r="5" fill="#8f8f8f"/><path d="M3.2 3.2l3.6 3.6M6.8 3.2l-3.6 3.6" stroke="#fff" stroke-width="1.5"/></svg>
<div class="t" style="left:1820px;top:874.5px">0</div>
<svg class="ic" style="left:1878.5px;top:875.9px;width:11px;height:10px" viewBox="0 0 11 10"><path d="M5.5 0.3L11 10H0z" fill="#8f8f8f" stroke="#8f8f8f" stroke-width=".6" stroke-linejoin="round"/><rect x="4.9" y="3.4" width="1.2" height="3.8" fill="#fff"/><rect x="4.9" y="7.9" width="1.2" height="1.2" fill="#fff"/></svg>
<div class="t" style="left:1899.8px;top:874.5px">0</div>
<svg class="ic" style="left:1959px;top:876.9px;width:10px;height:9px" viewBox="0 0 10 9"><path d="M1 4.8L3.8 7.6 9 1.8" fill="none" stroke="#13a85a" stroke-width="2.2"/></svg>
<div class="t" style="left:1980px;top:874.5px">2</div>
<div class="t" style="left:1611.4px;top:906.5px">kochab</div>
<svg class="ic" style="left:1799px;top:909.1px;width:10px;height:10px" viewBox="0 0 10 10"><circle cx="5" cy="5" r="5" fill="#8f8f8f"/><path d="M3.2 3.2l3.6 3.6M6.8 3.2l-3.6 3.6" stroke="#fff" stroke-width="1.5"/></svg>
<div class="t" style="left:1820px;top:906.5px">0</div>
<svg class="ic" style="left:1878.5px;top:907.9px;width:11px;height:10px" viewBox="0 0 11 10"><path d="M5.5 0.3L11 10H0z" fill="#8f8f8f" stroke="#8f8f8f" stroke-width=".6" stroke-linejoin="round"/><rect x="4.9" y="3.4" width="1.2" height="3.8" fill="#fff"/><rect x="4.9" y="7.9" width="1.2" height="1.2" fill="#fff"/></svg>
<div class="t" style="left:1899.8px;top:906.5px">0</div>
<svg class="ic" style="left:1959px;top:908.9px;width:10px;height:9px" viewBox="0 0 10 9"><path d="M1 4.8L3.8 7.6 9 1.8" fill="none" stroke="#13a85a" stroke-width="2.2"/></svg>
<div class="t" style="left:1980px;top:906.5px">26</div>
<div class="t" style="left:1611.4px;top:938.5px">betelgeuse</div>
<svg class="ic" style="left:1799px;top:941.1px;width:10px;height:10px" viewBox="0 0 10 10"><circle cx="5" cy="5" r="5" fill="#8f8f8f"/><path d="M3.2 3.2l3.6 3.6M6.8 3.2l-3.6 3.6" stroke="#fff" stroke-width="1.5"/></svg>
<div class="t" style="left:1820px;top:938.5px">0</div>
<svg class="ic" style="left:1878.5px;top:939.9px;width:11px;height:10px" viewBox="0 0 11 10"><path d="M5.5 0.3L11 10H0z" fill="#8f8f8f" stroke="#8f8f8f" stroke-width=".6" stroke-linejoin="round"/><rect x="4.9" y="3.4" width="1.2" height="3.8" fill="#fff"/><rect x="4.9" y="7.9" width="1.2" height="1.2" fill="#fff"/></svg>
<div class="t" style="left:1899.8px;top:938.5px">0</div>
<svg class="ic" style="left:1959px;top:940.9px;width:10px;height:9px" viewBox="0 0 10 9"><path d="M1 4.8L3.8 7.6 9 1.8" fill="none" stroke="#13a85a" stroke-width="2.2"/></svg>
<div class="t" style="left:1980px;top:938.5px">3</div>
</div></body></html>
